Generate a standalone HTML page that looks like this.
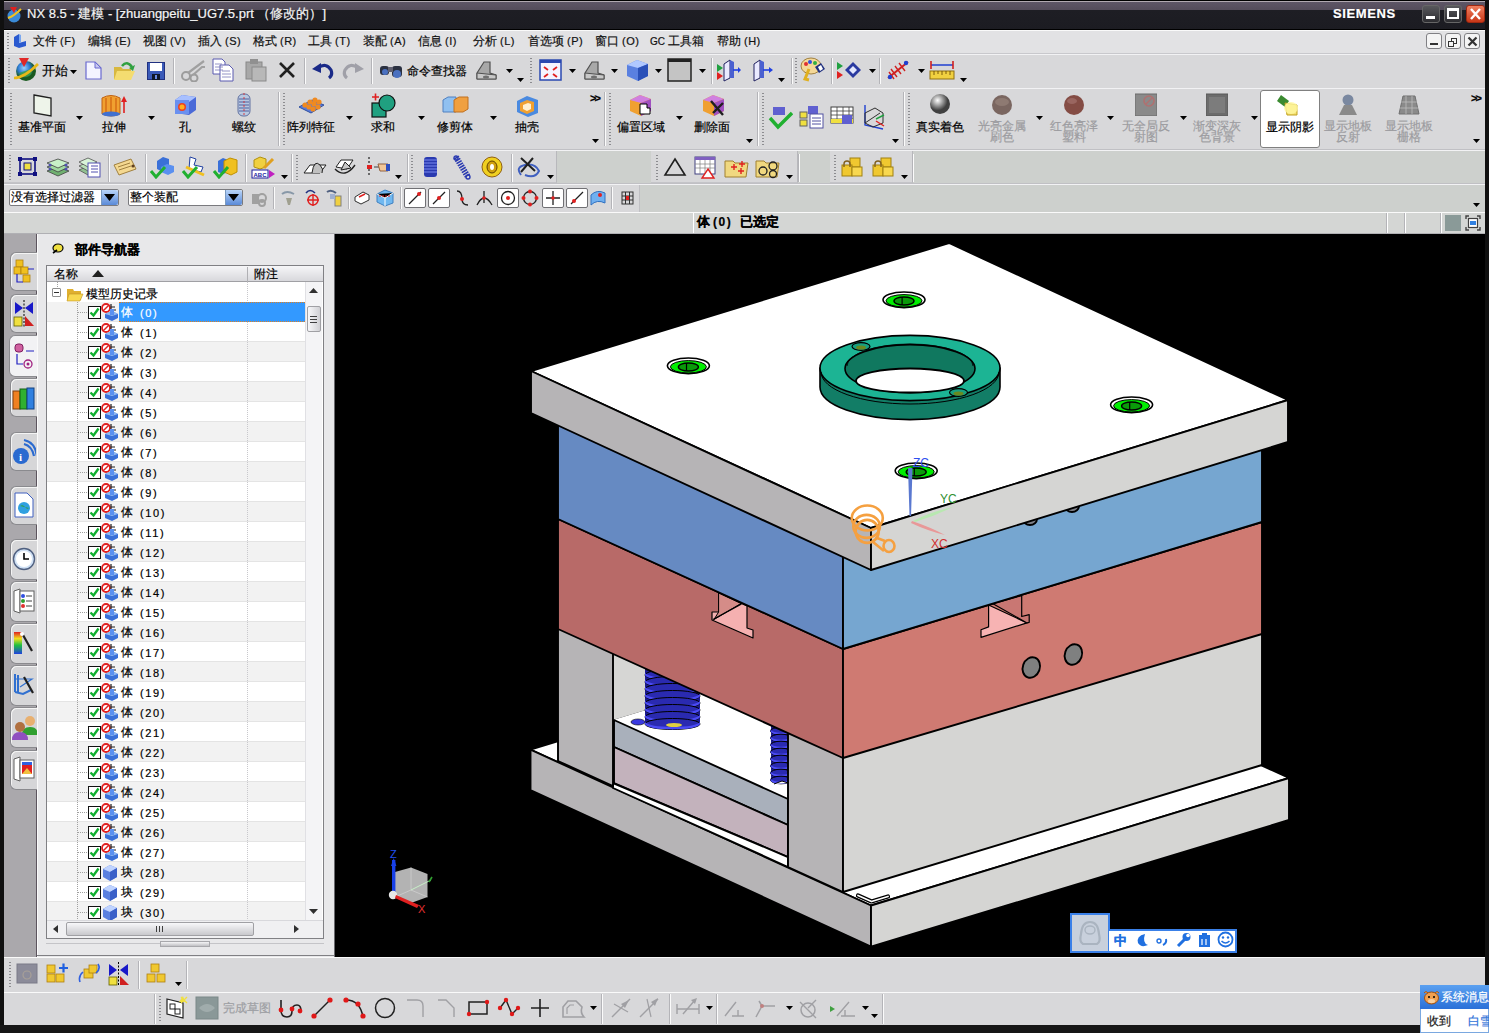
<!DOCTYPE html>
<html><head><meta charset="utf-8">
<style>
*{margin:0;padding:0;box-sizing:border-box}
html,body{width:1489px;height:1033px;overflow:hidden;background:#d6d6d6;font-family:"Liberation Sans",sans-serif;font-size:12px;color:#000}
.a{position:absolute}
.t{position:absolute;white-space:nowrap;font-size:12px;line-height:14px;-webkit-text-stroke:0.2px currentColor}
.dis{color:#9c9ca0}
</style></head><body>
<div class="a" style="left:0px;top:0px;width:1489px;height:30px;background:linear-gradient(#000 0 1px,#b0a8b0 1px 2px,#5e5666 2px,#544c5a 10px,#1e1e24 10px,#1c1c22 29px,#000 29px)"></div>
<div class="a" style="left:0px;top:0px;width:4px;height:1033px;background:#101010"></div>
<div class="a" style="left:1485px;top:0px;width:4px;height:1033px;background:#101010"></div>
<div class="a" style="left:0px;top:1025px;width:1489px;height:8px;background:#161616"></div>
<svg class="a" style="left:5px;top:5px;" width="20" height="18" viewBox="0 0 20 18"><circle cx="9" cy="11" r="6.5" fill="#3a8ad8"/><path d="M3,13 q6,-2 13,-9" stroke="#f0c020" stroke-width="2" fill="none"/><polygon points="5,2 12,2 9,8" fill="#e02020"/></svg>
<div class="t" style="left:27px;top:6px;color:#f4f4f4;font-size:13px;line-height:15px">NX 8.5 - 建模 - [zhuangpeitu_UG7.5.prt （修改的）]</div>
<div class="t" style="left:1333px;top:6px;color:#fff;font-size:13px;font-weight:bold;letter-spacing:0.6px;line-height:15px">SIEMENS</div>
<div class="a" style="left:1422px;top:5px;width:18px;height:18px;background:linear-gradient(#58585c,#2c2c30);border:1px solid #666;border-radius:3px"></div>
<div class="a" style="left:1426px;top:16px;width:9px;height:3px;background:#fff"></div>
<div class="a" style="left:1444px;top:5px;width:18px;height:18px;background:linear-gradient(#58585c,#2c2c30);border:1px solid #666;border-radius:3px"></div>
<div class="a" style="left:1447px;top:8px;width:12px;height:11px;border:2px solid #fff;border-top-width:3px"></div>
<div class="a" style="left:1466px;top:5px;width:19px;height:18px;background:linear-gradient(#f08060,#c83818);border:1px solid #a02810;border-radius:3px"></div>
<svg class="a" style="left:1469px;top:8px;" width="13" height="12" viewBox="0 0 13 12"><path d="M2,1 L11,11 M11,1 L2,11" stroke="#fff" stroke-width="2.4"/></svg>
<div class="a" style="left:4px;top:30px;width:1481px;height:24px;background:#e2e2e4;border-top:1px solid #fafafa;border-bottom:1px solid #c8c8cc"></div>
<div class="a" style="left:7px;top:33px;width:2px;height:18px;background:repeating-linear-gradient(#8c8c90 0 1px,transparent 1px 3px)"></div>
<svg class="a" style="left:12px;top:33px;" width="16" height="16" viewBox="0 0 16 16"><polygon points="2,4 7,1 7,10 14,8 14,13 7,15 2,13" fill="#2a5ad0"/><polygon points="7,1 9,2 9,9 7,10" fill="#7aa8f0"/></svg>
<div class="t" style="left:33px;top:34px;font-size:12px;color:#111">文件<span style="font-size:11px;margin-left:3px;letter-spacing:0.5px">(F)</span></div>
<div class="t" style="left:88px;top:34px;font-size:12px;color:#111">编辑<span style="font-size:11px;margin-left:3px;letter-spacing:0.5px">(E)</span></div>
<div class="t" style="left:143px;top:34px;font-size:12px;color:#111">视图<span style="font-size:11px;margin-left:3px;letter-spacing:0.5px">(V)</span></div>
<div class="t" style="left:198px;top:34px;font-size:12px;color:#111">插入<span style="font-size:11px;margin-left:3px;letter-spacing:0.5px">(S)</span></div>
<div class="t" style="left:253px;top:34px;font-size:12px;color:#111">格式<span style="font-size:11px;margin-left:3px;letter-spacing:0.5px">(R)</span></div>
<div class="t" style="left:308px;top:34px;font-size:12px;color:#111">工具<span style="font-size:11px;margin-left:3px;letter-spacing:0.5px">(T)</span></div>
<div class="t" style="left:363px;top:34px;font-size:12px;color:#111">装配<span style="font-size:11px;margin-left:3px;letter-spacing:0.5px">(A)</span></div>
<div class="t" style="left:418px;top:34px;font-size:12px;color:#111">信息<span style="font-size:11px;margin-left:3px;letter-spacing:0.5px">(I)</span></div>
<div class="t" style="left:473px;top:34px;font-size:12px;color:#111">分析<span style="font-size:11px;margin-left:3px;letter-spacing:0.5px">(L)</span></div>
<div class="t" style="left:528px;top:34px;font-size:12px;color:#111">首选项<span style="font-size:11px;margin-left:3px;letter-spacing:0.5px">(P)</span></div>
<div class="t" style="left:595px;top:34px;font-size:12px;color:#111">窗口<span style="font-size:11px;margin-left:3px;letter-spacing:0.5px">(O)</span></div>
<div class="t" style="left:650px;top:34px;font-size:12px;color:#111"><span style="font-size:10px">GC</span> 工具箱</div>
<div class="t" style="left:717px;top:34px;font-size:12px;color:#111">帮助<span style="font-size:11px;margin-left:3px;letter-spacing:0.5px">(H)</span></div>
<div class="a" style="left:1426px;top:33px;width:16px;height:16px;border:1px solid #808084;border-radius:3px;background:#f4f4f4"></div>
<div class="a" style="left:1445px;top:33px;width:16px;height:16px;border:1px solid #808084;border-radius:3px;background:#f4f4f4"></div>
<div class="a" style="left:1464px;top:33px;width:16px;height:16px;border:1px solid #808084;border-radius:3px;background:#f4f4f4"></div>
<div class="a" style="left:1430px;top:43px;width:8px;height:2px;background:#333"></div>
<div class="a" style="left:1451px;top:38px;width:6px;height:6px;border:1.5px solid #333"></div>
<div class="a" style="left:1448px;top:41px;width:6px;height:6px;border:1.5px solid #333;background:#f4f4f4"></div>
<svg class="a" style="left:1467px;top:36px;" width="11" height="11" viewBox="0 0 11 11"><path d="M1.5,1.5 L9.5,9.5 M9.5,1.5 L1.5,9.5" stroke="#333" stroke-width="2.2"/></svg>
<div class="a" style="left:4px;top:54px;width:1481px;height:35px;background:#d8d8da;border-top:1px solid #f2f2f4;border-bottom:1px solid #c0c0c4"></div>
<div class="a" style="left:4px;top:88px;width:1481px;height:62px;background:#d8d8da;border-top:1px solid #f2f2f4;border-bottom:1px solid #c0c0c4"></div>
<div class="a" style="left:4px;top:150px;width:1481px;height:34px;background:#cdd0cd;border-top:1px solid #f2f2f4;border-bottom:1px solid #c0c0c4"></div>
<div class="a" style="left:4px;top:151px;width:553px;height:32px;background:#d8d8da;border-right:1px solid #b8b8bc;border-bottom:1px solid #c4c4c8"></div>
<div class="a" style="left:651px;top:151px;width:147px;height:32px;background:#d8d8da;border-right:1px solid #b8b8bc;border-bottom:1px solid #c4c4c8"></div>
<div class="a" style="left:830px;top:151px;width:83px;height:32px;background:#d8d8da;border-right:1px solid #b8b8bc;border-bottom:1px solid #c4c4c8"></div>
<div class="a" style="left:4px;top:184px;width:1481px;height:28px;background:#cdd0cd;border-top:1px solid #f2f2f4"></div>
<div class="a" style="left:4px;top:185px;width:636px;height:27px;background:#d8d8da;border-right:1px solid #c0c0c4"></div>
<div class="a" style="left:4px;top:212px;width:1481px;height:22px;background:#d4d6d4;border-top:1px solid #fafafa;border-bottom:1px solid #b0b0b4"></div>
<div class="a" style="left:8px;top:58px;width:2px;height:26px;background:repeating-linear-gradient(#8c8c90 0 1px,transparent 1px 3px)"></div>
<svg class="a" style="left:13px;top:57px;" width="27" height="26" viewBox="0 0 27 26"><defs><radialGradient id="gl" cx="40%" cy="35%"><stop offset="0" stop-color="#9ad0ff"/><stop offset="0.6" stop-color="#2a78d0"/><stop offset="1" stop-color="#1a5a20"/></radialGradient></defs>
<circle cx="13" cy="14" r="10" fill="url(#gl)"/><path d="M6,16 q3,6 10,3 q4,-2 2,-7" fill="#3aa040" opacity="0.8"/>
<path d="M1,21 q10,0 24,-14" stroke="#e8b818" stroke-width="2.6" fill="none"/><polygon points="6,1 16,1 11,10" fill="#e02828"/></svg>
<div class="t" style="left:42px;top:64px;font-size:13px">开始</div>
<svg class="a" style="left:70px;top:70px;" width="7" height="4" viewBox="0 0 7 4"><polygon points="0,0 7,0 3.5,4" fill="#000"/></svg>
<svg class="a" style="left:85px;top:61px;" width="17" height="19" viewBox="0 0 17 19"><polygon points="1,1 10,1 16,7 16,18 1,18" fill="#f4f4ff" stroke="#6a6ad0" stroke-width="1.2"/><polygon points="10,1 10,7 16,7" fill="#c8c8f0" stroke="#6a6ad0" stroke-width="1"/></svg>
<svg class="a" style="left:113px;top:60px;" width="23" height="21" viewBox="0 0 23 21"><polygon points="1,7 8,7 10,9 18,9 18,19 1,19" fill="#d8b840"/><polygon points="4,11 22,11 18,20 1,20" fill="#f4dc70"/><path d="M9,6 q5,-6 10,1" stroke="#30a040" stroke-width="2.6" fill="none"/><polygon points="16,8 22,5 20,11" fill="#30a040"/></svg>
<svg class="a" style="left:147px;top:62px;" width="18" height="18" viewBox="0 0 18 18"><rect x="0.5" y="0.5" width="17" height="17" fill="#3a5ab8" stroke="#203080"/><rect x="3" y="1" width="12" height="8" fill="#fff"/><rect x="5" y="12" width="8" height="6" fill="#101828"/><rect x="8" y="13" width="2" height="4" fill="#6a8ae0"/></svg>
<div class="a" style="left:173px;top:58px;width:2px;height:26px;border-left:1px solid #b4b4b8;border-right:1px solid #fbfbfb"></div>
<svg class="a" style="left:180px;top:58px;" width="26" height="24" viewBox="0 0 26 24"><circle cx="6" cy="18" r="4" fill="none" stroke="#9c9c9c" stroke-width="2"/><circle cx="14" cy="20" r="3.5" fill="none" stroke="#9c9c9c" stroke-width="2"/><path d="M8,15 L24,3 M13,17 L22,9 L25,9" stroke="#a0a0a0" stroke-width="2.2" fill="none"/></svg>
<svg class="a" style="left:212px;top:58px;" width="23" height="24" viewBox="0 0 23 24"><polygon points="1,1 10,1 13,4 13,16 1,16" fill="#fff" stroke="#5a5ab0"/><polygon points="8,7 17,7 21,11 21,23 8,23" fill="#fff" stroke="#5a5ab0"/><path d="M10,13h8M10,16h9M10,19h9M3,6h7M3,9h8M3,12h8" stroke="#7a7ab8" stroke-width="0.8"/></svg>
<svg class="a" style="left:245px;top:58px;" width="22" height="24" viewBox="0 0 22 24"><rect x="1" y="4" width="16" height="17" fill="#a8a8a8" stroke="#888"/><rect x="5" y="1" width="8" height="5" fill="#909090"/><rect x="7" y="9" width="14" height="14" fill="#b8b8b8" stroke="#8a8a8a"/></svg>
<svg class="a" style="left:277px;top:60px;" width="20" height="20" viewBox="0 0 20 20"><path d="M3,3 L17,17 M17,3 L3,17" stroke="#202020" stroke-width="2.6"/></svg>
<div class="a" style="left:304px;top:58px;width:2px;height:26px;border-left:1px solid #b4b4b8;border-right:1px solid #fbfbfb"></div>
<svg class="a" style="left:311px;top:60px;" width="23" height="20" viewBox="0 0 23 20"><path d="M7,8 q8,-6 13,2 q2,5 -2,8" stroke="#1a2a88" stroke-width="3.2" fill="none"/><polygon points="1,9 10,3 10,13" fill="#1a2a88"/></svg>
<svg class="a" style="left:342px;top:60px;" width="23" height="20" viewBox="0 0 23 20"><path d="M16,8 q-8,-6 -13,2 q-2,5 2,8" stroke="#a0a0a8" stroke-width="3.2" fill="none"/><polygon points="22,9 13,3 13,13" fill="#a0a0a8"/></svg>
<div class="a" style="left:371px;top:58px;width:2px;height:26px;border-left:1px solid #b4b4b8;border-right:1px solid #fbfbfb"></div>
<svg class="a" style="left:379px;top:60px;" width="25" height="20" viewBox="0 0 25 20"><rect x="1" y="6" width="9" height="9" rx="3" fill="#2a3040"/><rect x="13" y="6" width="10" height="11" rx="3" fill="#2a3040"/><circle cx="18" cy="14" r="4" fill="#4a70c0"/><circle cx="6" cy="12" r="3" fill="#4a70c0"/><rect x="9" y="7" width="5" height="5" fill="#606070"/></svg>
<div class="t" style="left:407px;top:64px;font-size:12px">命令查找器</div>
<svg class="a" style="left:474px;top:59px;" width="24" height="22" viewBox="0 0 24 22"><polygon points="3,14 10,3 16,3 16,14 22,16 22,20 3,20" fill="#a8a8a8" stroke="#505050" stroke-width="1.2"/><polygon points="3,14 22,16 22,20 3,20" fill="#c8c8c8" stroke="#505050" stroke-width="1"/><ellipse cx="12" cy="18" rx="3" ry="1.5" fill="#707070"/></svg>
<svg class="a" style="left:506px;top:69px;" width="7" height="4" viewBox="0 0 7 4"><polygon points="0,0 7,0 3.5,4" fill="#000"/></svg>
<svg class="a" style="left:517px;top:78px;" width="7" height="4" viewBox="0 0 7 4"><polygon points="0,0 7,0 3.5,4" fill="#000"/></svg>
<div class="a" style="left:530px;top:58px;width:2px;height:26px;background:repeating-linear-gradient(#8c8c90 0 1px,transparent 1px 3px)"></div>
<svg class="a" style="left:539px;top:59px;" width="23" height="22" viewBox="0 0 23 22"><rect x="1" y="1" width="21" height="20" fill="#f4f4ff" stroke="#2a48b0" stroke-width="1.5"/><rect x="1" y="1" width="21" height="3" fill="#2a48b0"/><path d="M5,8 l4,3 M18,8 l-4,3 M5,18 l4,-3 M18,18 l-4,-3" stroke="#e02020" stroke-width="1.8"/></svg>
<svg class="a" style="left:569px;top:69px;" width="7" height="4" viewBox="0 0 7 4"><polygon points="0,0 7,0 3.5,4" fill="#000"/></svg>
<svg class="a" style="left:582px;top:59px;" width="24" height="22" viewBox="0 0 24 22"><polygon points="3,14 10,3 16,3 16,14 22,16 22,20 3,20" fill="#a8a8a8" stroke="#505050" stroke-width="1.2"/><polygon points="3,14 22,16 22,20 3,20" fill="#c8c8c8" stroke="#505050" stroke-width="1"/><ellipse cx="12" cy="18" rx="3" ry="1.5" fill="#707070"/></svg>
<svg class="a" style="left:611px;top:69px;" width="7" height="4" viewBox="0 0 7 4"><polygon points="0,0 7,0 3.5,4" fill="#000"/></svg>
<svg class="a" style="left:625px;top:58px;" width="25" height="24" viewBox="0 0 25 24"><polygon points="2,7 12,2 23,6 23,18 13,23 2,18" fill="#5a80e0"/><polygon points="2,7 12,2 23,6 13,10" fill="#b0c8ff"/><polygon points="13,10 23,6 23,18 13,23" fill="#2a50b8"/></svg>
<svg class="a" style="left:655px;top:69px;" width="7" height="4" viewBox="0 0 7 4"><polygon points="0,0 7,0 3.5,4" fill="#000"/></svg>
<svg class="a" style="left:667px;top:58px;" width="26" height="24" viewBox="0 0 26 24"><rect x="1" y="1" width="23" height="22" fill="#c4c4c4" stroke="#222" stroke-width="1.5"/><rect x="1" y="1" width="23" height="3" fill="#222"/></svg>
<svg class="a" style="left:699px;top:69px;" width="7" height="4" viewBox="0 0 7 4"><polygon points="0,0 7,0 3.5,4" fill="#000"/></svg>
<div class="a" style="left:711px;top:58px;width:2px;height:26px;border-left:1px solid #b4b4b8;border-right:1px solid #fbfbfb"></div>
<svg class="a" style="left:716px;top:58px;" width="25" height="24" viewBox="0 0 25 24"><polygon points="1,6 7,10 1,14" fill="#20a040"/><polygon points="1,14 7,18 1,22" fill="#e02020"/><polygon points="8,6 14,2 14,20 8,23" fill="#eaeaff" stroke="#202060"/><polygon points="14,2 18,4 18,20 14,20" fill="#4a60d0"/><path d="M17,12 h7" stroke="#2040e0" stroke-width="1.6"/><polygon points="22,9 25,12 22,15" fill="#2040e0"/></svg>
<svg class="a" style="left:750px;top:58px;" width="25" height="24" viewBox="0 0 25 24"><polygon points="4,6 10,2 10,20 4,23" fill="#eaeaff" stroke="#202060"/><polygon points="10,2 14,4 14,20 10,20" fill="#4a60d0"/><path d="M13,12 h8" stroke="#2040e0" stroke-width="1.6"/><polygon points="19,9 23,12 19,15" fill="#2040e0"/></svg>
<svg class="a" style="left:778px;top:78px;" width="7" height="4" viewBox="0 0 7 4"><polygon points="0,0 7,0 3.5,4" fill="#000"/></svg>
<div class="a" style="left:791px;top:58px;width:2px;height:26px;border-left:1px solid #b4b4b8;border-right:1px solid #fbfbfb"></div>
<div class="a" style="left:795px;top:58px;width:2px;height:26px;background:repeating-linear-gradient(#8c8c90 0 1px,transparent 1px 3px)"></div>
<svg class="a" style="left:800px;top:57px;" width="26" height="25" viewBox="0 0 26 25"><ellipse cx="11" cy="9" rx="10" ry="8" fill="#f4d898" stroke="#a08040"/><circle cx="6" cy="7" r="2" fill="#e03030"/><circle cx="10" cy="5" r="2" fill="#3050e0"/><circle cx="15" cy="6" r="2" fill="#30b040"/><path d="M9,12 l-4,10 l4,1" stroke="#e0b020" stroke-width="3" fill="none"/><polygon points="15,10 21,6 25,12 19,16" fill="#203080"/><polygon points="18,10 21,8 23,12 20,14" fill="#fff"/></svg>
<div class="a" style="left:831px;top:58px;width:2px;height:26px;border-left:1px solid #b4b4b8;border-right:1px solid #fbfbfb"></div>
<svg class="a" style="left:836px;top:58px;" width="27" height="24" viewBox="0 0 27 24"><polygon points="1,4 7,8 1,12" fill="#20a040"/><polygon points="1,13 7,17 1,21" fill="#e02020"/><polygon points="9,12 17,4 25,12 17,20" fill="#2a3aa0"/><polygon points="13,12 17,8 21,12 17,16" fill="#e4e8ff"/></svg>
<svg class="a" style="left:869px;top:69px;" width="7" height="4" viewBox="0 0 7 4"><polygon points="0,0 7,0 3.5,4" fill="#000"/></svg>
<div class="a" style="left:879px;top:58px;width:2px;height:26px;border-left:1px solid #b4b4b8;border-right:1px solid #fbfbfb"></div>
<svg class="a" style="left:886px;top:58px;" width="25" height="24" viewBox="0 0 25 24"><path d="M2,20 L22,4" stroke="#d02020" stroke-width="2"/><path d="M5,11 l6,8 M9,8 l6,8 M13,5 l6,8 M3,14 l5,7" stroke="#d02020" stroke-width="1.4"/><circle cx="20" cy="5" r="2.2" fill="#2040d0"/><circle cx="4" cy="19" r="2.2" fill="#2040d0"/></svg>
<svg class="a" style="left:918px;top:69px;" width="7" height="4" viewBox="0 0 7 4"><polygon points="0,0 7,0 3.5,4" fill="#000"/></svg>
<svg class="a" style="left:929px;top:59px;" width="26" height="22" viewBox="0 0 26 22"><path d="M2,6 h22" stroke="#2040d0" stroke-width="1.5"/><path d="M2,2 v8 M24,2 v8" stroke="#d02020" stroke-width="1.6"/><rect x="1" y="12" width="24" height="8" fill="#f0d040" stroke="#907010"/><path d="M5,12v4M9,12v3M13,12v4M17,12v3M21,12v4" stroke="#604000" stroke-width="0.8"/></svg>
<svg class="a" style="left:960px;top:78px;" width="7" height="4" viewBox="0 0 7 4"><polygon points="0,0 7,0 3.5,4" fill="#000"/></svg>
<div class="a" style="left:10px;top:93px;width:2px;height:52px;background:repeating-linear-gradient(#8c8c90 0 1px,transparent 1px 3px)"></div>
<svg class="a" style="left:31px;top:93px;" width="23" height="24" viewBox="0 0 23 24"><polygon points="3,2 20,5 20,23 3,20" fill="#eef4ea" stroke="#202020" stroke-width="1.3"/></svg>
<div class="t " style="left:2px;top:120px;width:80px;text-align:center;font-size:12px">基准平面</div>
<svg class="a" style="left:76px;top:116px;" width="7" height="4" viewBox="0 0 7 4"><polygon points="0,0 7,0 3.5,4" fill="#000"/></svg>
<svg class="a" style="left:100px;top:93px;" width="28" height="25" viewBox="0 0 28 25"><path d="M2,5 q9,-5 18,0 v16 q-9,4 -18,0 z" fill="#f0a030" stroke="#c06010"/><path d="M6,5 v16 M11,4 v18 M16,5 v16" stroke="#d06010" stroke-width="1.2"/><ellipse cx="11" cy="21" rx="9" ry="2.5" fill="#4070d0"/><path d="M24,20 v-12" stroke="#e02020" stroke-width="1.6"/><polygon points="21,9 24,3 27,9" fill="#e02020"/></svg>
<div class="t " style="left:74px;top:120px;width:80px;text-align:center;font-size:12px">拉伸</div>
<svg class="a" style="left:148px;top:116px;" width="7" height="4" viewBox="0 0 7 4"><polygon points="0,0 7,0 3.5,4" fill="#000"/></svg>
<svg class="a" style="left:174px;top:94px;" width="23" height="22" viewBox="0 0 23 22"><polygon points="1,6 8,1 22,3 22,16 15,21 1,19" fill="#4a6ad8"/><polygon points="1,6 8,1 22,3 15,8" fill="#a8c0ff"/><rect x="1" y="6" width="14" height="14" fill="#6a90f0"/><circle cx="8" cy="13" r="4" fill="#f04020"/><circle cx="8" cy="13" r="2.5" fill="#ffb020"/></svg>
<div class="t " style="left:145px;top:120px;width:80px;text-align:center;font-size:12px">孔</div>
<svg class="a" style="left:236px;top:92px;" width="16" height="26" viewBox="0 0 16 26"><rect x="2" y="2" width="12" height="22" rx="5" fill="#b8c8e0" stroke="#6070a0"/><path d="M3,7h10M3,10h10M3,13h10M3,16h10M3,19h10" stroke="#5060a0" stroke-width="1"/><path d="M8,1v24" stroke="#e02020" stroke-width="0.8" stroke-dasharray="2 2"/></svg>
<div class="t " style="left:204px;top:120px;width:80px;text-align:center;font-size:12px">螺纹</div>
<div class="a" style="left:278px;top:92px;width:2px;height:54px;border-left:1px solid #b4b4b8;border-right:1px solid #fbfbfb"></div>
<div class="a" style="left:283px;top:93px;width:2px;height:52px;background:repeating-linear-gradient(#8c8c90 0 1px,transparent 1px 3px)"></div>
<svg class="a" style="left:298px;top:95px;" width="27" height="20" viewBox="0 0 27 20"><polygon points="1,12 14,5 26,10 13,18" fill="#5a7ad8" stroke="#3050a0"/><g fill="#f08a20"><circle cx="7" cy="10" r="2.6"/><circle cx="12" cy="7" r="2.6"/><circle cx="17" cy="5" r="2.6"/><circle cx="11" cy="12" r="2.6"/><circle cx="16" cy="9" r="2.6"/><circle cx="21" cy="7" r="2.6"/><circle cx="15" cy="14" r="2.6"/><circle cx="20" cy="12" r="2.6"/></g></svg>
<div class="t " style="left:271px;top:120px;width:80px;text-align:center;font-size:12px">阵列特征</div>
<svg class="a" style="left:346px;top:116px;" width="7" height="4" viewBox="0 0 7 4"><polygon points="0,0 7,0 3.5,4" fill="#000"/></svg>
<svg class="a" style="left:370px;top:92px;" width="26" height="27" viewBox="0 0 26 27"><rect x="2" y="11" width="14" height="14" fill="#20a080" stroke="#101010" stroke-width="1.2"/><circle cx="17" cy="11" r="8" fill="#20a080" stroke="#101010" stroke-width="1.2"/><path d="M2,5h7M5.5,1.5v7" stroke="#e02020" stroke-width="1.6"/></svg>
<div class="t " style="left:343px;top:120px;width:80px;text-align:center;font-size:12px">求和</div>
<svg class="a" style="left:418px;top:116px;" width="7" height="4" viewBox="0 0 7 4"><polygon points="0,0 7,0 3.5,4" fill="#000"/></svg>
<svg class="a" style="left:442px;top:95px;" width="27" height="20" viewBox="0 0 27 20"><polygon points="1,5 6,2 14,2 14,17 1,17" fill="#90c0f0" stroke="#5080c0"/><polygon points="12,5 17,2 26,2 26,14 21,17 12,17" fill="#f0a040" stroke="#c07020"/></svg>
<div class="t " style="left:415px;top:120px;width:80px;text-align:center;font-size:12px">修剪体</div>
<svg class="a" style="left:490px;top:116px;" width="7" height="4" viewBox="0 0 7 4"><polygon points="0,0 7,0 3.5,4" fill="#000"/></svg>
<svg class="a" style="left:515px;top:93px;" width="25" height="24" viewBox="0 0 25 24"><polygon points="2,8 12,3 23,7 23,20 13,24 2,19" fill="#4a8ae0"/><polygon points="5,10 12,7 19,9 19,18 12,21 5,18" fill="#f0a030"/><polygon points="8,12 13,10 16,11 16,16 12,18 8,16" fill="#fff0d0"/></svg>
<div class="t " style="left:487px;top:120px;width:80px;text-align:center;font-size:12px">抽壳</div>
<div class="t" style="left:590px;top:91px;"><b style="font-size:11px;letter-spacing:-2px">&gt;&gt;</b></div>
<svg class="a" style="left:592px;top:139px;" width="7" height="4" viewBox="0 0 7 4"><polygon points="0,0 7,0 3.5,4" fill="#000"/></svg>
<div class="a" style="left:604px;top:92px;width:2px;height:54px;border-left:1px solid #b4b4b8;border-right:1px solid #fbfbfb"></div>
<div class="a" style="left:609px;top:93px;width:2px;height:52px;background:repeating-linear-gradient(#8c8c90 0 1px,transparent 1px 3px)"></div>
<svg class="a" style="left:628px;top:93px;" width="26" height="24" viewBox="0 0 26 24"><polygon points="2,7 12,2 23,6 23,18 13,23 2,18" fill="#f0a030"/><polygon points="2,7 12,2 23,6 13,10" fill="#d080e0"/><polygon points="13,10 23,6 23,18 13,23" fill="#a050c0"/><path d="M12,11 v10 h10 v-6 h-3 v-4 z" fill="#fff" stroke="#000"/></svg>
<div class="t " style="left:601px;top:120px;width:80px;text-align:center;font-size:12px">偏置区域</div>
<svg class="a" style="left:676px;top:116px;" width="7" height="4" viewBox="0 0 7 4"><polygon points="0,0 7,0 3.5,4" fill="#000"/></svg>
<svg class="a" style="left:701px;top:93px;" width="24" height="24" viewBox="0 0 24 24"><polygon points="2,7 12,2 23,6 23,18 13,23 2,18" fill="#f0a030"/><polygon points="2,7 12,2 23,6 13,10" fill="#d080e0"/><polygon points="13,10 23,6 23,18 13,23" fill="#a050c0"/><path d="M10,8 L22,22 M22,10 L12,20" stroke="#202020" stroke-width="2.4"/></svg>
<div class="t " style="left:672px;top:120px;width:80px;text-align:center;font-size:12px">删除面</div>
<svg class="a" style="left:746px;top:139px;" width="7" height="4" viewBox="0 0 7 4"><polygon points="0,0 7,0 3.5,4" fill="#000"/></svg>
<div class="a" style="left:757px;top:92px;width:2px;height:54px;border-left:1px solid #b4b4b8;border-right:1px solid #fbfbfb"></div>
<div class="a" style="left:762px;top:93px;width:2px;height:52px;background:repeating-linear-gradient(#8c8c90 0 1px,transparent 1px 3px)"></div>
<svg class="a" style="left:768px;top:104px;" width="25" height="26" viewBox="0 0 25 26"><rect x="5" y="3" width="12" height="8" fill="#6060d0"/><path d="M2,14 l8,9 l14,-14" stroke="#20b030" stroke-width="3.4" fill="none"/></svg>
<svg class="a" style="left:798px;top:104px;" width="27" height="26" viewBox="0 0 27 26"><rect x="10" y="2" width="10" height="8" fill="#6060d0"/><rect x="2" y="8" width="7" height="6" fill="#f0e040" stroke="#606060"/><rect x="2" y="16" width="7" height="6" fill="#f0e040" stroke="#606060"/><rect x="12" y="10" width="13" height="14" fill="#fff" stroke="#5050a0"/><path d="M14,14h9M14,17h9M14,20h9" stroke="#5050a0"/></svg>
<svg class="a" style="left:830px;top:104px;" width="26" height="26" viewBox="0 0 26 26"><rect x="1" y="3" width="22" height="16" fill="#fff" stroke="#404040"/><path d="M1,7h22M1,11h22M1,15h22M7,3v16M13,3v16M19,3v16" stroke="#404040" stroke-width="0.8"/><rect x="1" y="15" width="22" height="4" fill="#f0e040"/><rect x="12" y="11" width="10" height="9" fill="#6060d0"/></svg>
<svg class="a" style="left:862px;top:103px;" width="24" height="28" viewBox="0 0 24 28"><path d="M3,2 v20 l18,4" stroke="#2040d0" stroke-width="1.4" fill="none"/><polygon points="3,10 13,5 21,10 21,20 11,24 3,20" fill="none" stroke="#303030"/><path d="M3,20 L18,10" stroke="#303030"/><path d="M14,18 l8,5" stroke="#e02020" stroke-width="1.4"/><path d="M14,16 l8,-4" stroke="#20a040" stroke-width="1.4"/></svg>
<svg class="a" style="left:892px;top:139px;" width="7" height="4" viewBox="0 0 7 4"><polygon points="0,0 7,0 3.5,4" fill="#000"/></svg>
<div class="a" style="left:903px;top:92px;width:2px;height:54px;border-left:1px solid #b4b4b8;border-right:1px solid #fbfbfb"></div>
<div class="a" style="left:908px;top:93px;width:2px;height:52px;background:repeating-linear-gradient(#8c8c90 0 1px,transparent 1px 3px)"></div>
<svg class="a" style="left:929px;top:93px;" width="22" height="22" viewBox="0 0 22 22"><defs><radialGradient id="sp" cx="38%" cy="32%"><stop offset="0" stop-color="#fff"/><stop offset="0.5" stop-color="#a0a0a0"/><stop offset="1" stop-color="#404040"/></radialGradient></defs><circle cx="11" cy="11" r="10" fill="url(#sp)"/></svg>
<div class="t " style="left:900px;top:120px;width:80px;text-align:center;font-size:12px">真实着色</div>
<svg class="a" style="left:991px;top:93px;" width="22" height="23" viewBox="0 0 22 23"><circle cx="11" cy="12" r="10" fill="#7a6660"/><ellipse cx="11" cy="9" rx="7" ry="4" fill="#8e7a72"/></svg>
<div class="t dis" style="left:972px;top:121px;width:60px;text-align:center;line-height:11px;font-size:12px">光亮金属<br>刷色</div>
<svg class="a" style="left:1036px;top:116px;" width="7" height="4" viewBox="0 0 7 4"><polygon points="0,0 7,0 3.5,4" fill="#000"/></svg>
<svg class="a" style="left:1063px;top:93px;" width="22" height="23" viewBox="0 0 22 23"><circle cx="11" cy="12" r="10" fill="#844c44"/><ellipse cx="9" cy="8" rx="5" ry="3" fill="#9a6660"/></svg>
<div class="t dis" style="left:1044px;top:121px;width:60px;text-align:center;line-height:11px;font-size:12px">红色亮泽<br>塑料</div>
<svg class="a" style="left:1107px;top:116px;" width="7" height="4" viewBox="0 0 7 4"><polygon points="0,0 7,0 3.5,4" fill="#000"/></svg>
<svg class="a" style="left:1135px;top:93px;" width="22" height="23" viewBox="0 0 22 23"><rect x="0" y="1" width="22" height="22" fill="#8a8a8a" stroke="#6a6a6a"/><circle cx="14" cy="8" r="5" fill="none" stroke="#b07070" stroke-width="1.6"/><path d="M11,11 L17,5" stroke="#b07070" stroke-width="1.4"/></svg>
<div class="t dis" style="left:1116px;top:121px;width:60px;text-align:center;line-height:11px;font-size:12px">无全局反<br>射图</div>
<svg class="a" style="left:1180px;top:116px;" width="7" height="4" viewBox="0 0 7 4"><polygon points="0,0 7,0 3.5,4" fill="#000"/></svg>
<svg class="a" style="left:1206px;top:93px;" width="22" height="23" viewBox="0 0 22 23"><rect x="0" y="1" width="22" height="22" fill="#6c6c6c" stroke="#585858"/><rect x="3" y="4" width="16" height="16" fill="#7c7c7c"/></svg>
<div class="t dis" style="left:1187px;top:121px;width:60px;text-align:center;line-height:11px;font-size:12px">渐变深灰<br>色背景</div>
<svg class="a" style="left:1251px;top:116px;" width="7" height="4" viewBox="0 0 7 4"><polygon points="0,0 7,0 3.5,4" fill="#000"/></svg>
<div class="a" style="left:1260px;top:90px;width:60px;height:58px;background:#fff;border:1px solid #808080;border-radius:3px"></div>
<svg class="a" style="left:1277px;top:93px;" width="24" height="24" viewBox="0 0 24 24"><polygon points="4,2 12,8 8,14 0,8" fill="#3a8a30"/><polygon points="8,10 20,12 20,22 10,22" fill="#f4e070" stroke="#c0a020"/><ellipse cx="14" cy="15" rx="7" ry="6" fill="#fff8a0" opacity="0.8"/></svg>
<div class="t" style="left:1260px;top:120px;width:60px;text-align:center;font-size:12px">显示阴影</div>
<svg class="a" style="left:1337px;top:93px;" width="22" height="23" viewBox="0 0 22 23"><circle cx="11" cy="7" r="5.5" fill="#7a88a0"/><polygon points="2,22 7,12 15,12 20,22" fill="#8a8a8a"/></svg>
<div class="t dis" style="left:1318px;top:121px;width:60px;text-align:center;line-height:11px;font-size:12px">显示地板<br>反射</div>
<svg class="a" style="left:1398px;top:93px;" width="22" height="23" viewBox="0 0 22 23"><polygon points="1,21 5,3 17,3 21,21" fill="#8a8a8a" stroke="#707070"/><path d="M3,9h16M2,15h18M8,3v18M14,3v18" stroke="#bcbcbc" stroke-width="0.8"/></svg>
<div class="t dis" style="left:1379px;top:121px;width:60px;text-align:center;line-height:11px;font-size:12px">显示地板<br>栅格</div>
<div class="t" style="left:1471px;top:91px;"><b style="font-size:11px;letter-spacing:-2px">&gt;&gt;</b></div>
<svg class="a" style="left:1473px;top:139px;" width="7" height="4" viewBox="0 0 7 4"><polygon points="0,0 7,0 3.5,4" fill="#000"/></svg>
<div class="a" style="left:9px;top:155px;width:2px;height:26px;background:repeating-linear-gradient(#8c8c90 0 1px,transparent 1px 3px)"></div>
<svg class="a" style="left:17px;top:156px;" width="21" height="22" viewBox="0 0 21 22"><rect x="3" y="3" width="15" height="15" fill="none" stroke="#101080" stroke-width="1.6"/><rect x="7" y="7" width="7" height="7" fill="#f0e040" stroke="#101080"/><g fill="#101080"><rect x="1" y="1" width="4" height="4"/><rect x="16" y="1" width="4" height="4"/><rect x="1" y="16" width="4" height="4"/><rect x="16" y="16" width="4" height="4"/></g></svg>
<svg class="a" style="left:46px;top:156px;" width="24" height="22" viewBox="0 0 24 22"><g stroke="#404040" stroke-width="0.8"><polygon points="1,15 12,11 23,15 12,20" fill="#70b070"/><polygon points="1,11 12,7 23,11 12,16" fill="#a0d8a0"/><polygon points="1,7 12,3 23,7 12,12" fill="#c8f0c8"/></g><g fill="#5050b0"><circle cx="4" cy="9" r="1.5"/><circle cx="20" cy="9" r="1.5"/><circle cx="4" cy="13" r="1.5"/><circle cx="20" cy="13" r="1.5"/></g></svg>
<svg class="a" style="left:78px;top:156px;" width="23" height="22" viewBox="0 0 23 22"><g stroke="#505050" stroke-width="0.8"><polygon points="1,14 10,10 19,14 10,19" fill="#90c090"/><polygon points="1,10 10,6 19,10 10,15" fill="#b8e0b8"/><polygon points="1,6 10,2 19,6 10,11" fill="#d8f4d8"/></g><rect x="10" y="7" width="12" height="14" fill="#fff" stroke="#5050b0"/><path d="M13,10h7M13,13h7M13,16h7" stroke="#5050b0"/></svg>
<div class="a" style="left:108px;top:154px;width:2px;height:28px;border-left:1px solid #b4b4b8;border-right:1px solid #fbfbfb"></div>
<svg class="a" style="left:113px;top:158px;" width="25" height="18" viewBox="0 0 25 18"><polygon points="1,7 18,1 23,11 6,17" fill="#f4d890" stroke="#a08040"/><path d="M5,9 l12,-4 M6,12 l12,-4" stroke="#a08040"/><circle cx="20" cy="8" r="1.6" fill="#604020"/></svg>
<div class="a" style="left:145px;top:154px;width:2px;height:28px;border-left:1px solid #b4b4b8;border-right:1px solid #fbfbfb"></div>
<svg class="a" style="left:149px;top:155px;" width="26" height="24" viewBox="0 0 26 24"><polygon points="8,6 14,2 20,4 20,14 14,17 8,14" fill="#3a70d8"/><polygon points="12,12 18,9 25,11 25,17 19,20 12,17" fill="#5a90f0"/><path d="M2,16 l5,6 l9,-10" stroke="#20b030" stroke-width="3" fill="none"/></svg>
<svg class="a" style="left:181px;top:155px;" width="26" height="24" viewBox="0 0 26 24"><polygon points="9,2 15,4 13,10 22,12 20,17 8,14" fill="#fff" stroke="#2040a0"/><path d="M5,12 l18,8" stroke="#f0c020" stroke-width="3"/><path d="M2,16 l5,6 l9,-10" stroke="#20b030" stroke-width="3" fill="none"/></svg>
<svg class="a" style="left:212px;top:155px;" width="26" height="24" viewBox="0 0 26 24"><polygon points="6,6 11,3 16,5 16,17 11,19 6,17" fill="#3a70d8"/><polygon points="12,6 18,3 25,5 25,17 19,20 12,17" fill="#f0c020" stroke="#c09000"/><path d="M2,16 l5,6 l9,-10" stroke="#20b030" stroke-width="3" fill="none"/></svg>
<div class="a" style="left:245px;top:154px;width:2px;height:28px;border-left:1px solid #b4b4b8;border-right:1px solid #fbfbfb"></div>
<svg class="a" style="left:250px;top:155px;" width="26" height="24" viewBox="0 0 26 24"><polygon points="4,5 10,2 16,4 16,12 10,14 4,12" fill="#f0d040" stroke="#b09010"/><path d="M14,13 l9,-9" stroke="#e0a020" stroke-width="3"/><rect x="2" y="15" width="16" height="8" fill="#fff" stroke="#2020a0"/><text x="3.5" y="22" font-size="6" font-family="Liberation Sans" font-weight="bold" fill="#2020a0">ABC</text><polygon points="19,15 25,19 19,23" fill="#c020c0"/></svg>
<svg class="a" style="left:281px;top:175px;" width="7" height="4" viewBox="0 0 7 4"><polygon points="0,0 7,0 3.5,4" fill="#000"/></svg>
<div class="a" style="left:291px;top:154px;width:2px;height:28px;border-left:1px solid #b4b4b8;border-right:1px solid #fbfbfb"></div>
<div class="a" style="left:296px;top:155px;width:2px;height:26px;background:repeating-linear-gradient(#8c8c90 0 1px,transparent 1px 3px)"></div>
<svg class="a" style="left:303px;top:157px;" width="24" height="20" viewBox="0 0 24 20"><polygon points="1,16 7,8 23,8 17,16" fill="#fff" stroke="#202020"/><path d="M9,16 q2,-14 8,-8 q4,4 2,8" fill="#c0c0c0" stroke="#202020"/></svg>
<svg class="a" style="left:333px;top:157px;" width="24" height="20" viewBox="0 0 24 20"><path d="M2,12 q10,10 20,-4" fill="none" stroke="#202020" stroke-width="1.4"/><polygon points="3,10 8,3 20,3 14,12" fill="#fff" stroke="#202020"/><path d="M8,13 l4,-8 l6,6 z" fill="#c8c8c8" stroke="#202020"/></svg>
<svg class="a" style="left:366px;top:156px;" width="25" height="22" viewBox="0 0 25 22"><path d="M3,1v20" stroke="#202020" stroke-width="1.2" stroke-dasharray="2 2"/><rect x="1" y="9" width="5" height="4" fill="#e02020"/><path d="M8,11 h8" stroke="#404040"/><polygon points="12,8 22,8 22,15 14,15" fill="#f4c898" stroke="#906040"/><rect x="20" y="8" width="4" height="7" fill="#3050c0"/></svg>
<svg class="a" style="left:395px;top:175px;" width="7" height="4" viewBox="0 0 7 4"><polygon points="0,0 7,0 3.5,4" fill="#000"/></svg>
<div class="a" style="left:407px;top:154px;width:2px;height:28px;border-left:1px solid #b4b4b8;border-right:1px solid #fbfbfb"></div>
<div class="a" style="left:411px;top:155px;width:2px;height:26px;background:repeating-linear-gradient(#8c8c90 0 1px,transparent 1px 3px)"></div>
<svg class="a" style="left:422px;top:155px;" width="17" height="24" viewBox="0 0 17 24"><rect x="2" y="2" width="13" height="20" rx="3" fill="#2a3ab0"/><path d="M2,5h13M2,8h13M2,11h13M2,14h13M2,17h13" stroke="#7a8af0" stroke-width="1"/></svg>
<svg class="a" style="left:452px;top:155px;" width="20" height="25" viewBox="0 0 20 25"><path d="M4,2 L16,22" stroke="#2a3ab0" stroke-width="6" stroke-dasharray="1.6 1"/><circle cx="4" cy="3" r="2" fill="none" stroke="#2a3ab0" stroke-width="1.4"/><circle cx="16" cy="22" r="2" fill="none" stroke="#2a3ab0" stroke-width="1.4"/></svg>
<svg class="a" style="left:481px;top:156px;" width="23" height="22" viewBox="0 0 23 22"><ellipse cx="11" cy="11" rx="10" ry="10" fill="#f0d020" stroke="#906010"/><ellipse cx="11" cy="11" rx="5" ry="6" fill="#d0a010" stroke="#604000"/><ellipse cx="11" cy="11" rx="2" ry="3" fill="#fff"/></svg>
<div class="a" style="left:511px;top:154px;width:2px;height:28px;border-left:1px solid #b4b4b8;border-right:1px solid #fbfbfb"></div>
<svg class="a" style="left:517px;top:155px;" width="25" height="24" viewBox="0 0 25 24"><path d="M4,20 q-6,-8 4,-10 q10,-2 14,6 q-4,8 -14,4" fill="none" stroke="#4060c0" stroke-width="2"/><path d="M4,3 L18,16 M16,3 L4,17" stroke="#202020" stroke-width="2"/></svg>
<svg class="a" style="left:547px;top:175px;" width="7" height="4" viewBox="0 0 7 4"><polygon points="0,0 7,0 3.5,4" fill="#000"/></svg>
<div class="a" style="left:656px;top:155px;width:2px;height:26px;background:repeating-linear-gradient(#8c8c90 0 1px,transparent 1px 3px)"></div>
<svg class="a" style="left:663px;top:157px;" width="24" height="20" viewBox="0 0 24 20"><polygon points="12,2 22,18 2,18" fill="none" stroke="#202020" stroke-width="1.6"/></svg>
<svg class="a" style="left:694px;top:156px;" width="23" height="23" viewBox="0 0 23 23"><rect x="1" y="1" width="20" height="17" fill="#fff" stroke="#404080"/><rect x="1" y="1" width="20" height="3" fill="#8060c0"/><path d="M1,8h20M1,12h20M6,4v14M11,4v14M16,4v14" stroke="#808080" stroke-width="0.7"/><polygon points="14,13 20,22 8,22" fill="#fff" stroke="#e02020" stroke-width="1.4"/></svg>
<svg class="a" style="left:724px;top:155px;" width="26" height="24" viewBox="0 0 26 24"><polygon points="1,6 9,6 11,8 24,8 22,22 1,22" fill="#f0d880" stroke="#a08030"/><path d="M7,12h6M10,9v6M14,16h6M17,13v6M15,9h6M18,6v6" stroke="#e02020" stroke-width="1.4"/></svg>
<svg class="a" style="left:755px;top:155px;" width="26" height="24" viewBox="0 0 26 24"><polygon points="1,6 9,6 11,8 24,8 22,22 1,22" fill="#f0d880" stroke="#a08030"/><circle cx="8" cy="16" r="4" fill="none" stroke="#202020" stroke-width="1.3"/><circle cx="18" cy="11" r="4" fill="none" stroke="#202020" stroke-width="1.3"/><circle cx="18" cy="19" r="3.5" fill="none" stroke="#202020" stroke-width="1.3"/></svg>
<svg class="a" style="left:786px;top:175px;" width="7" height="4" viewBox="0 0 7 4"><polygon points="0,0 7,0 3.5,4" fill="#000"/></svg>
<div class="a" style="left:798px;top:154px;width:2px;height:28px;border-left:1px solid #b4b4b8;border-right:1px solid #fbfbfb"></div>
<div class="a" style="left:834px;top:155px;width:2px;height:26px;background:repeating-linear-gradient(#8c8c90 0 1px,transparent 1px 3px)"></div>
<svg class="a" style="left:840px;top:155px;" width="24" height="24" viewBox="0 0 24 24"><rect x="10" y="3" width="10" height="9" fill="#f0c830" stroke="#a08010"/><rect x="2" y="10" width="10" height="11" fill="#f0c830" stroke="#a08010"/><rect x="12" y="12" width="10" height="9" fill="#f8d850" stroke="#a08010"/><path d="M4,12 v-3 a3,3 0 0 1 6,0 v3" fill="none" stroke="#806020" stroke-width="1.4"/></svg>
<svg class="a" style="left:871px;top:155px;" width="24" height="24" viewBox="0 0 24 24"><rect x="10" y="3" width="10" height="9" fill="#f0c830" stroke="#a08010"/><rect x="2" y="10" width="10" height="11" fill="#f0c830" stroke="#a08010"/><rect x="12" y="12" width="10" height="9" fill="#f8d850" stroke="#a08010"/><path d="M4,12 v-3 a3,3 0 0 1 6,0 v3" fill="none" stroke="#806020" stroke-width="1.4"/></svg>
<svg class="a" style="left:901px;top:175px;" width="7" height="4" viewBox="0 0 7 4"><polygon points="0,0 7,0 3.5,4" fill="#000"/></svg>
<div class="a" style="left:912px;top:154px;width:2px;height:28px;border-left:1px solid #b4b4b8;border-right:1px solid #fbfbfb"></div>
<div class="a" style="left:9px;top:189px;width:110px;height:17px;background:#fff;border:1px solid #7a7a7e;border-radius:2px"></div>
<div class="t" style="left:11px;top:190px;font-size:12px;line-height:15px">没有选择过滤器</div>
<div class="a" style="left:101px;top:190px;width:17px;height:15px;background:linear-gradient(#b8d4f8,#5a8ad8);border-left:1px solid #7a9ac0;border-radius:0 2px 2px 0"></div>
<svg class="a" style="left:104px;top:194px;" width="11" height="7" viewBox="0 0 11 7"><polygon points="0,0 11,0 5.5,7" fill="#000"/></svg>
<div class="a" style="left:128px;top:189px;width:115px;height:17px;background:#fff;border:1px solid #7a7a7e;border-radius:2px"></div>
<div class="t" style="left:130px;top:190px;font-size:12px;line-height:15px">整个装配</div>
<div class="a" style="left:225px;top:190px;width:17px;height:15px;background:linear-gradient(#b8d4f8,#5a8ad8);border-left:1px solid #7a9ac0;border-radius:0 2px 2px 0"></div>
<svg class="a" style="left:228px;top:194px;" width="11" height="7" viewBox="0 0 11 7"><polygon points="0,0 11,0 5.5,7" fill="#000"/></svg>
<svg class="a" style="left:250px;top:189px;" width="18" height="18" viewBox="0 0 18 18"><rect x="2" y="5" width="7" height="10" fill="#a0a0a0"/><circle cx="12" cy="9" r="4" fill="none" stroke="#a0a0a0" stroke-width="2"/><circle cx="12" cy="14" r="3" fill="none" stroke="#a0a0a0" stroke-width="2"/></svg>
<div class="a" style="left:273px;top:187px;width:2px;height:22px;border-left:1px solid #b4b4b8;border-right:1px solid #fbfbfb"></div>
<svg class="a" style="left:280px;top:189px;" width="17" height="18" viewBox="0 0 17 18"><path d="M2,5 q5,-4 12,0" stroke="#8898a8" stroke-width="2" fill="none"/><polygon points="6,9 12,9 10,16 8,16" fill="#a0a090"/></svg>
<svg class="a" style="left:303px;top:188px;" width="18" height="19" viewBox="0 0 18 19"><path d="M3,5 q4,-5 9,0" stroke="#203080" stroke-width="1.6" fill="none"/><circle cx="10" cy="12" r="5" fill="none" stroke="#e02020" stroke-width="1.5"/><path d="M4,12h12M10,6v12" stroke="#e02020" stroke-width="1.4"/></svg>
<svg class="a" style="left:325px;top:188px;" width="18" height="19" viewBox="0 0 18 19"><path d="M2,4 q4,-3 9,1" stroke="#506080" stroke-width="2" fill="none"/><rect x="10" y="8" width="6" height="10" fill="#f0d040" stroke="#808080"/><rect x="5" y="6" width="5" height="5" fill="#a0b0d0"/></svg>
<div class="a" style="left:348px;top:187px;width:2px;height:22px;border-left:1px solid #b4b4b8;border-right:1px solid #fbfbfb"></div>
<svg class="a" style="left:353px;top:189px;" width="18" height="17" viewBox="0 0 18 17"><polygon points="2,8 10,3 16,6 16,11 8,15 2,12" fill="#fff" stroke="#303030"/><path d="M6,8 l6,-3" stroke="#e02020" stroke-width="1.5"/></svg>
<svg class="a" style="left:375px;top:188px;" width="20" height="19" viewBox="0 0 20 19"><polygon points="2,6 10,2 18,5 18,15 10,18 2,14" fill="#70b8f0" stroke="#4080c0"/><path d="M2,6 l8,4 l8,-5 M10,10 v8" stroke="#fff" stroke-width="1"/><path d="M4,8h12" stroke="#e02020" stroke-width="1" stroke-dasharray="2 1"/></svg>
<div class="a" style="left:400px;top:187px;width:2px;height:22px;border-left:1px solid #b4b4b8;border-right:1px solid #fbfbfb"></div>
<div class="a" style="left:404px;top:188px;width:22px;height:20px;background:#fff;border:1px solid #707074;border-radius:2px"></div>
<svg class="a" style="left:406px;top:189px;" width="18" height="18" viewBox="0 0 18 18"><path d="M3,15 L15,3" stroke="#202020" stroke-width="1.3"/><circle cx="13" cy="5" r="2" fill="#e02020"/></svg>
<div class="a" style="left:428px;top:188px;width:22px;height:20px;background:#fff;border:1px solid #707074;border-radius:2px"></div>
<svg class="a" style="left:430px;top:189px;" width="18" height="18" viewBox="0 0 18 18"><path d="M3,15 L15,3" stroke="#202020" stroke-width="1.3"/><circle cx="9" cy="9" r="2" fill="#e02020"/></svg>
<svg class="a" style="left:454px;top:189px;" width="17" height="18" viewBox="0 0 17 18"><path d="M3,2 q5,0 5,8 q0,6 6,6" stroke="#202020" stroke-width="1.3" fill="none"/><circle cx="8" cy="10" r="2" fill="#e02020"/></svg>
<svg class="a" style="left:476px;top:189px;" width="17" height="18" viewBox="0 0 17 18"><path d="M1,16 q7,-14 15,0 M8,2 v12" stroke="#202020" stroke-width="1.3" fill="none"/><circle cx="8" cy="9" r="1.8" fill="#e02020"/></svg>
<div class="a" style="left:497px;top:188px;width:22px;height:20px;background:#fff;border:1px solid #707074;border-radius:2px"></div>
<svg class="a" style="left:499px;top:189px;" width="18" height="18" viewBox="0 0 18 18"><circle cx="9" cy="9" r="6.5" fill="none" stroke="#202020" stroke-width="1.3"/><circle cx="9" cy="9" r="2" fill="#e02020"/></svg>
<svg class="a" style="left:521px;top:189px;" width="18" height="18" viewBox="0 0 18 18"><circle cx="9" cy="9" r="6.5" fill="none" stroke="#202020" stroke-width="1.3"/><g fill="#e02020"><circle cx="9" cy="2.5" r="2"/><circle cx="2.5" cy="9" r="2"/><circle cx="15.5" cy="9" r="2"/><circle cx="9" cy="15.5" r="2"/></g></svg>
<div class="a" style="left:542px;top:188px;width:22px;height:20px;background:#fff;border:1px solid #707074;border-radius:2px"></div>
<svg class="a" style="left:544px;top:189px;" width="18" height="18" viewBox="0 0 18 18"><path d="M9,2v14M2,9h14" stroke="#202020" stroke-width="1.3"/><circle cx="9" cy="9" r="1.8" fill="#e02020"/></svg>
<div class="a" style="left:566px;top:188px;width:22px;height:20px;background:#fff;border:1px solid #707074;border-radius:2px"></div>
<svg class="a" style="left:568px;top:189px;" width="18" height="18" viewBox="0 0 18 18"><path d="M3,15 L15,3" stroke="#202020" stroke-width="1.3"/><circle cx="6" cy="12" r="2" fill="#e02020"/></svg>
<svg class="a" style="left:589px;top:189px;" width="18" height="18" viewBox="0 0 18 18"><path d="M2,6 q6,-6 14,-2 v10 q-8,-4 -14,2 z" fill="#70b0f0" stroke="#3070c0"/><circle cx="11" cy="6" r="2" fill="#e02020"/></svg>
<div class="a" style="left:611px;top:187px;width:2px;height:22px;border-left:1px solid #b4b4b8;border-right:1px solid #fbfbfb"></div>
<svg class="a" style="left:621px;top:191px;" width="13" height="14" viewBox="0 0 13 14"><rect x="1" y="1" width="11" height="12" fill="none" stroke="#303030"/><path d="M1,5h11M1,9h11M4.5,1v12M8.5,1v12" stroke="#303030"/><rect x="5" y="5" width="3" height="4" fill="#e02020"/></svg>
<svg class="a" style="left:1473px;top:203px;" width="7" height="4" viewBox="0 0 7 4"><polygon points="0,0 7,0 3.5,4" fill="#000"/></svg>
<div class="a" style="left:693px;top:213px;width:1px;height:20px;background:#a8a8ac;border-right:1px solid #fff"></div>
<div class="t" style="left:697px;top:215px;font-size:12.5px;line-height:15px"><b>体</b></div>
<div class="t" style="left:713px;top:215px;font-size:12px;line-height:15px;letter-spacing:1.5px"><b>(0)</b></div>
<div class="t" style="left:740px;top:215px;font-size:12.5px;line-height:15px"><b>已选定</b></div>
<div class="a" style="left:1386px;top:213px;width:1px;height:20px;background:#b4b4b8"></div>
<div class="a" style="left:1387px;top:213px;width:1px;height:20px;background:#fff"></div>
<div class="a" style="left:1404px;top:213px;width:1px;height:20px;background:#b4b4b8"></div>
<div class="a" style="left:1405px;top:213px;width:1px;height:20px;background:#fff"></div>
<div class="a" style="left:1440px;top:213px;width:1px;height:20px;background:#b4b4b8"></div>
<div class="a" style="left:1441px;top:213px;width:1px;height:20px;background:#fff"></div>
<div class="a" style="left:1445px;top:215px;width:16px;height:16px;background:#8a9a98"></div>
<svg class="a" style="left:1465px;top:215px;" width="16" height="16" viewBox="0 0 16 16"><path d="M1,4 v-3 h3 M12,1 h3 v3 M15,12 v3 h-3 M4,15 h-3 v-3" stroke="#404040" stroke-width="1.4" fill="none"/><rect x="3.5" y="3.5" width="9" height="9" fill="#fff" stroke="#404040" stroke-width="1.2"/><rect x="5" y="6" width="6" height="4" fill="#3080e0"/></svg>
<div class="a" style="left:4px;top:234px;width:33px;height:723px;background:#aaa8ac"></div>
<div class="a" style="left:36px;top:234px;width:1px;height:723px;background:#5c545e"></div>
<div class="a" style="left:37px;top:234px;width:297px;height:723px;background:#e8e8ea"></div>
<div class="a" style="left:334px;top:234px;width:1px;height:723px;background:#6a6a6e"></div>
<div class="a" style="left:335px;top:234px;width:1150px;height:723px;background:#000"></div>
<div class="a" style="left:10px;top:252px;width:27px;height:39px;background:#d6d6d8;border:1px solid #8a8a8e;border-right:none;border-radius:6px 0 0 6px;box-shadow:inset 1px 1px 0 #f4f4f4"></div>
<div class="a" style="left:10px;top:294px;width:27px;height:39px;background:#d6d6d8;border:1px solid #8a8a8e;border-right:none;border-radius:6px 0 0 6px;box-shadow:inset 1px 1px 0 #f4f4f4"></div>
<div class="a" style="left:9px;top:335px;width:29px;height:42px;background:#f2f2f4;border:1px solid #8c8c90;border-right:none;border-radius:6px 0 0 6px"></div>
<div class="a" style="left:10px;top:378px;width:27px;height:39px;background:#d6d6d8;border:1px solid #8a8a8e;border-right:none;border-radius:6px 0 0 6px;box-shadow:inset 1px 1px 0 #f4f4f4"></div>
<div class="a" style="left:10px;top:432px;width:27px;height:39px;background:#d6d6d8;border:1px solid #8a8a8e;border-right:none;border-radius:6px 0 0 6px;box-shadow:inset 1px 1px 0 #f4f4f4"></div>
<div class="a" style="left:10px;top:486px;width:27px;height:39px;background:#d6d6d8;border:1px solid #8a8a8e;border-right:none;border-radius:6px 0 0 6px;box-shadow:inset 1px 1px 0 #f4f4f4"></div>
<div class="a" style="left:10px;top:539px;width:27px;height:41px;background:#d6d6d8;border:1px solid #8a8a8e;border-right:none;border-radius:6px 0 0 6px;box-shadow:inset 1px 1px 0 #f4f4f4"></div>
<div class="a" style="left:10px;top:581px;width:27px;height:41px;background:#d6d6d8;border:1px solid #8a8a8e;border-right:none;border-radius:6px 0 0 6px;box-shadow:inset 1px 1px 0 #f4f4f4"></div>
<div class="a" style="left:10px;top:623px;width:27px;height:41px;background:#d6d6d8;border:1px solid #8a8a8e;border-right:none;border-radius:6px 0 0 6px;box-shadow:inset 1px 1px 0 #f4f4f4"></div>
<div class="a" style="left:10px;top:665px;width:27px;height:41px;background:#d6d6d8;border:1px solid #8a8a8e;border-right:none;border-radius:6px 0 0 6px;box-shadow:inset 1px 1px 0 #f4f4f4"></div>
<div class="a" style="left:10px;top:707px;width:27px;height:41px;background:#d6d6d8;border:1px solid #8a8a8e;border-right:none;border-radius:6px 0 0 6px;box-shadow:inset 1px 1px 0 #f4f4f4"></div>
<div class="a" style="left:10px;top:750px;width:27px;height:40px;background:#d6d6d8;border:1px solid #8a8a8e;border-right:none;border-radius:6px 0 0 6px;box-shadow:inset 1px 1px 0 #f4f4f4"></div>
<svg class="a" style="left:13px;top:258px;" width="22" height="28" viewBox="0 0 22 28"><g fill="#f0c020" stroke="#b08010" stroke-width="0.8"><rect x="3" y="2" width="7" height="7"/><rect x="1" y="9" width="7" height="7"/><rect x="8" y="9" width="7" height="7"/><rect x="10" y="17" width="7" height="7"/></g><path d="M4,16v8h6 M15,11h6" stroke="#2020c0" stroke-width="1.2" fill="none"/></svg>
<svg class="a" style="left:13px;top:300px;" width="22" height="28" viewBox="0 0 22 28"><polygon points="2,2 10,8 2,14" fill="#1818c8"/><polygon points="20,2 12,8 20,14" fill="#1818c8"/><path d="M11,0v28" stroke="#000" stroke-dasharray="2 1.5"/><rect x="1" y="17" width="8" height="9" fill="#f0e040" stroke="#606000" stroke-width="0.8"/><polygon points="12,16 21,26 12,26" fill="#d02020"/></svg>
<svg class="a" style="left:13px;top:342px;" width="22" height="28" viewBox="0 0 22 28"><rect x="2" y="2" width="8" height="8" rx="3" fill="#d060a0" stroke="#802060"/><path d="M4,12v10h6 M13,9h8" stroke="#2020c0" stroke-width="1.2" fill="none"/><circle cx="15" cy="22" r="4" fill="none" stroke="#a02080" stroke-width="1.3"/><circle cx="15" cy="22" r="1.5" fill="#a02080"/></svg>
<svg class="a" style="left:12px;top:385px;" width="24" height="26" viewBox="0 0 24 26"><rect x="1" y="6" width="7" height="18" fill="#f08020" stroke="#804010"/><rect x="8" y="4" width="7" height="20" fill="#30b030" stroke="#106010"/><rect x="15" y="3" width="7" height="21" fill="#3080e0" stroke="#104080"/></svg>
<svg class="a" style="left:12px;top:438px;" width="24" height="28" viewBox="0 0 24 28"><circle cx="9" cy="18" r="8" fill="#2a6ad0"/><text x="7" y="23" font-size="11" font-weight="bold" fill="#fff" font-family="Liberation Serif">i</text><path d="M12,6 q8,2 10,12 M12,2 q11,2 13,16" stroke="#2a6ad0" stroke-width="2.2" fill="none"/></svg>
<svg class="a" style="left:13px;top:491px;" width="22" height="28" viewBox="0 0 22 28"><polygon points="2,2 14,2 20,8 20,26 2,26" fill="#fff" stroke="#4060c0"/><circle cx="11" cy="17" r="6" fill="#30a0e0"/><path d="M7,15 q3,-2 5,1 q2,3 4,1" fill="#30a040"/></svg>
<svg class="a" style="left:12px;top:545px;" width="24" height="28" viewBox="0 0 24 28"><circle cx="12" cy="14" r="10.5" fill="#cfe0f4" stroke="#506080" stroke-width="1.4"/><circle cx="12" cy="14" r="8" fill="#fff"/><path d="M12,8v6h5" stroke="#000" stroke-width="1.6" fill="none"/></svg>
<svg class="a" style="left:12px;top:587px;" width="24" height="28" viewBox="0 0 24 28"><polygon points="2,4 8,2 8,26 2,24" fill="#fff" stroke="#606060"/><rect x="8" y="4" width="14" height="20" fill="#fff" stroke="#606060"/><circle cx="11" cy="9" r="2" fill="#3050e0"/><circle cx="11" cy="14" r="2" fill="#30a030"/><circle cx="11" cy="19" r="2" fill="#e03030"/><path d="M14,9h6M14,14h6M14,19h6" stroke="#404040"/></svg>
<svg class="a" style="left:12px;top:629px;" width="24" height="28" viewBox="0 0 24 28"><defs><linearGradient id="rb" x1="0" y1="0" x2="0" y2="1"><stop offset="0" stop-color="#e02020"/><stop offset="0.3" stop-color="#f0e020"/><stop offset="0.6" stop-color="#20c040"/><stop offset="1" stop-color="#2040e0"/></linearGradient></defs><rect x="2" y="3" width="8" height="22" fill="url(#rb)"/><path d="M11,6 L20,22" stroke="#202020" stroke-width="2.2"/><circle cx="10" cy="5" r="2" fill="#fff"/></svg>
<svg class="a" style="left:12px;top:671px;" width="24" height="28" viewBox="0 0 24 28"><path d="M3,3 v18 M6,4 v17 M3,21 l8,2 l8,-4" stroke="#3070d0" stroke-width="2" fill="none"/><path d="M4,8 h16 l-12,8" stroke="#3070d0" stroke-width="1.2" fill="none"/><path d="M12,6 L21,22" stroke="#202020" stroke-width="2.2"/></svg>
<svg class="a" style="left:11px;top:713px;" width="26" height="28" viewBox="0 0 26 28"><circle cx="19" cy="8" r="5" fill="#e8b070"/><path d="M11,22 q0,-8 8,-8 q8,0 8,8 z" fill="#30a030"/><circle cx="9" cy="14" r="5" fill="#b07040"/><path d="M1,27 q0,-8 8,-8 q8,0 8,8 z" fill="#9050c0"/></svg>
<svg class="a" style="left:12px;top:755px;" width="24" height="28" viewBox="0 0 24 28"><polygon points="2,4 8,2 8,26 2,24" fill="#fff" stroke="#606060"/><rect x="8" y="5" width="14" height="18" fill="#fff" stroke="#606060"/><rect x="10" y="7" width="10" height="12" fill="#e02020"/><polygon points="10,19 15,13 20,19" fill="#f0c040"/><rect x="10" y="7" width="10" height="3" fill="#3060e0"/></svg>
<div class="a" style="left:37px;top:234px;width:1px;height:723px;background:#fafafa"></div>
<svg class="a" style="left:51px;top:242px;" width="13" height="13" viewBox="0 0 13 13"><ellipse cx="7" cy="6" rx="5" ry="4" fill="#f0e040" stroke="#000" stroke-width="1.2"/><path d="M2,11 l4,-3" stroke="#000" stroke-width="1.6"/></svg>
<div class="t" style="left:75px;top:242px;font-size:13px;line-height:15px"><b>部件导航器</b></div>
<div class="a" style="left:46px;top:265px;width:278px;height:674px;background:#fff;border:1px solid #808084"></div>
<div class="a" style="left:47px;top:266px;width:258px;height:16px;background:linear-gradient(#f6f6f8,#d8d8dc);border-bottom:1px solid #a0a0a4"></div>
<div class="a" style="left:305px;top:266px;width:18px;height:16px;background:linear-gradient(#f6f6f8,#d8d8dc);border-bottom:1px solid #a0a0a4"></div>
<div class="a" style="left:247px;top:267px;width:1px;height:15px;background:#b0b0b4"></div>
<div class="t" style="left:54px;top:267px;font-size:12px">名称</div>
<svg class="a" style="left:92px;top:270px;" width="12" height="7" viewBox="0 0 12 7"><polygon points="0,7 12,7 6,0" fill="#202020"/></svg>
<div class="t" style="left:254px;top:267px;font-size:12px">附注</div>
<div class="a" style="left:47px;top:302px;width:258px;height:20px;background:#f2f2f2;border-bottom:1px solid #e4e4e4"></div>
<div class="a" style="left:47px;top:322px;width:258px;height:20px;background:#ffffff;border-bottom:1px solid #e4e4e4"></div>
<div class="a" style="left:47px;top:342px;width:258px;height:20px;background:#f2f2f2;border-bottom:1px solid #e4e4e4"></div>
<div class="a" style="left:47px;top:362px;width:258px;height:20px;background:#ffffff;border-bottom:1px solid #e4e4e4"></div>
<div class="a" style="left:47px;top:382px;width:258px;height:20px;background:#f2f2f2;border-bottom:1px solid #e4e4e4"></div>
<div class="a" style="left:47px;top:402px;width:258px;height:20px;background:#ffffff;border-bottom:1px solid #e4e4e4"></div>
<div class="a" style="left:47px;top:422px;width:258px;height:20px;background:#f2f2f2;border-bottom:1px solid #e4e4e4"></div>
<div class="a" style="left:47px;top:442px;width:258px;height:20px;background:#ffffff;border-bottom:1px solid #e4e4e4"></div>
<div class="a" style="left:47px;top:462px;width:258px;height:20px;background:#f2f2f2;border-bottom:1px solid #e4e4e4"></div>
<div class="a" style="left:47px;top:482px;width:258px;height:20px;background:#ffffff;border-bottom:1px solid #e4e4e4"></div>
<div class="a" style="left:47px;top:502px;width:258px;height:20px;background:#f2f2f2;border-bottom:1px solid #e4e4e4"></div>
<div class="a" style="left:47px;top:522px;width:258px;height:20px;background:#ffffff;border-bottom:1px solid #e4e4e4"></div>
<div class="a" style="left:47px;top:542px;width:258px;height:20px;background:#f2f2f2;border-bottom:1px solid #e4e4e4"></div>
<div class="a" style="left:47px;top:562px;width:258px;height:20px;background:#ffffff;border-bottom:1px solid #e4e4e4"></div>
<div class="a" style="left:47px;top:582px;width:258px;height:20px;background:#f2f2f2;border-bottom:1px solid #e4e4e4"></div>
<div class="a" style="left:47px;top:602px;width:258px;height:20px;background:#ffffff;border-bottom:1px solid #e4e4e4"></div>
<div class="a" style="left:47px;top:622px;width:258px;height:20px;background:#f2f2f2;border-bottom:1px solid #e4e4e4"></div>
<div class="a" style="left:47px;top:642px;width:258px;height:20px;background:#ffffff;border-bottom:1px solid #e4e4e4"></div>
<div class="a" style="left:47px;top:662px;width:258px;height:20px;background:#f2f2f2;border-bottom:1px solid #e4e4e4"></div>
<div class="a" style="left:47px;top:682px;width:258px;height:20px;background:#ffffff;border-bottom:1px solid #e4e4e4"></div>
<div class="a" style="left:47px;top:702px;width:258px;height:20px;background:#f2f2f2;border-bottom:1px solid #e4e4e4"></div>
<div class="a" style="left:47px;top:722px;width:258px;height:20px;background:#ffffff;border-bottom:1px solid #e4e4e4"></div>
<div class="a" style="left:47px;top:742px;width:258px;height:20px;background:#f2f2f2;border-bottom:1px solid #e4e4e4"></div>
<div class="a" style="left:47px;top:762px;width:258px;height:20px;background:#ffffff;border-bottom:1px solid #e4e4e4"></div>
<div class="a" style="left:47px;top:782px;width:258px;height:20px;background:#f2f2f2;border-bottom:1px solid #e4e4e4"></div>
<div class="a" style="left:47px;top:802px;width:258px;height:20px;background:#ffffff;border-bottom:1px solid #e4e4e4"></div>
<div class="a" style="left:47px;top:822px;width:258px;height:20px;background:#f2f2f2;border-bottom:1px solid #e4e4e4"></div>
<div class="a" style="left:47px;top:842px;width:258px;height:20px;background:#ffffff;border-bottom:1px solid #e4e4e4"></div>
<div class="a" style="left:47px;top:862px;width:258px;height:20px;background:#f2f2f2;border-bottom:1px solid #e4e4e4"></div>
<div class="a" style="left:47px;top:882px;width:258px;height:20px;background:#ffffff;border-bottom:1px solid #e4e4e4"></div>
<div class="a" style="left:47px;top:902px;width:258px;height:20px;background:#f2f2f2;border-bottom:1px solid #e4e4e4"></div>
<div class="a" style="left:247px;top:282px;width:1px;height:638px;background:repeating-linear-gradient(#c8c8cc 0 1px,transparent 1px 2px)"></div>
<div class="a" style="left:57px;top:282px;width:1px;height:12px;background:repeating-linear-gradient(#a0a0a0 0 1px,transparent 1px 2px)"></div>
<div class="a" style="left:77px;top:302px;width:1px;height:618px;background:repeating-linear-gradient(#a0a0a0 0 1px,transparent 1px 2px)"></div>
<div class="a" style="left:52px;top:288px;width:9px;height:9px;border:1px solid #909090;background:#fff;border-radius:1px"></div>
<div class="a" style="left:54px;top:292px;width:5px;height:1px;background:#303030"></div>
<svg class="a" style="left:66px;top:287px;" width="18" height="15" viewBox="0 0 18 15"><polygon points="1,2 7,2 8,4 15,4 15,13 1,13" fill="#e0b030"/><polygon points="3,7 17,7 14,14 1,14" fill="#f8d850" stroke="#c09020" stroke-width="0.6"/></svg>
<div class="t" style="left:86px;top:287px;font-size:12px">模型历史记录</div>
<div class="a" style="left:119px;top:302px;width:186px;height:20px;background:#3399ff;border-top:1px dotted #e08020;border-bottom:1px dotted #e08020"></div>
<div class="a" style="left:78px;top:312px;width:9px;height:1px;background:repeating-linear-gradient(90deg,#a0a0a0 0 1px,transparent 1px 2px)"></div>
<svg class="a" style="left:88px;top:306px;" width="13" height="13" viewBox="0 0 13 13"><rect x="0.5" y="0.5" width="12" height="12" fill="#fff" stroke="#101010"/><path d="M2.5,6.5 l3,3 l5,-7" stroke="#10b030" stroke-width="2.4" fill="none"/></svg>
<svg class="a" style="left:101px;top:303px;" width="18" height="19" viewBox="0 0 18 19"><circle cx="5" cy="5" r="4" fill="#fff" stroke="#e02020" stroke-width="1.8"/><path d="M2,8 L8,2" stroke="#e02020" stroke-width="1.5"/><path d="M10,1 v6 h5 M10,4h4" stroke="#202020" stroke-width="1.2" fill="none"/><polygon points="4,11 11,8 17,11 17,15 11,18 4,15" fill="#3a70d8"/><polygon points="4,11 11,8 17,11 11,13" fill="#90b8f0"/><rect x="9" y="6" width="4" height="6" fill="#5a90f0"/></svg>
<div class="t" style="left:121px;top:305px;font-size:12px;color:#fff">体</div>
<div class="t" style="left:140px;top:306px;font-size:11px;color:#fff;letter-spacing:1.6px">(0)</div>
<div class="a" style="left:78px;top:332px;width:9px;height:1px;background:repeating-linear-gradient(90deg,#a0a0a0 0 1px,transparent 1px 2px)"></div>
<svg class="a" style="left:88px;top:326px;" width="13" height="13" viewBox="0 0 13 13"><rect x="0.5" y="0.5" width="12" height="12" fill="#fff" stroke="#101010"/><path d="M2.5,6.5 l3,3 l5,-7" stroke="#10b030" stroke-width="2.4" fill="none"/></svg>
<svg class="a" style="left:101px;top:323px;" width="18" height="19" viewBox="0 0 18 19"><circle cx="5" cy="5" r="4" fill="#fff" stroke="#e02020" stroke-width="1.8"/><path d="M2,8 L8,2" stroke="#e02020" stroke-width="1.5"/><path d="M10,1 v6 h5 M10,4h4" stroke="#202020" stroke-width="1.2" fill="none"/><polygon points="4,11 11,8 17,11 17,15 11,18 4,15" fill="#3a70d8"/><polygon points="4,11 11,8 17,11 11,13" fill="#90b8f0"/><rect x="9" y="6" width="4" height="6" fill="#5a90f0"/></svg>
<div class="t" style="left:121px;top:325px;font-size:12px;color:#000">体</div>
<div class="t" style="left:140px;top:326px;font-size:11px;color:#000;letter-spacing:1.6px">(1)</div>
<div class="a" style="left:78px;top:352px;width:9px;height:1px;background:repeating-linear-gradient(90deg,#a0a0a0 0 1px,transparent 1px 2px)"></div>
<svg class="a" style="left:88px;top:346px;" width="13" height="13" viewBox="0 0 13 13"><rect x="0.5" y="0.5" width="12" height="12" fill="#fff" stroke="#101010"/><path d="M2.5,6.5 l3,3 l5,-7" stroke="#10b030" stroke-width="2.4" fill="none"/></svg>
<svg class="a" style="left:101px;top:343px;" width="18" height="19" viewBox="0 0 18 19"><circle cx="5" cy="5" r="4" fill="#fff" stroke="#e02020" stroke-width="1.8"/><path d="M2,8 L8,2" stroke="#e02020" stroke-width="1.5"/><path d="M10,1 v6 h5 M10,4h4" stroke="#202020" stroke-width="1.2" fill="none"/><polygon points="4,11 11,8 17,11 17,15 11,18 4,15" fill="#3a70d8"/><polygon points="4,11 11,8 17,11 11,13" fill="#90b8f0"/><rect x="9" y="6" width="4" height="6" fill="#5a90f0"/></svg>
<div class="t" style="left:121px;top:345px;font-size:12px;color:#000">体</div>
<div class="t" style="left:140px;top:346px;font-size:11px;color:#000;letter-spacing:1.6px">(2)</div>
<div class="a" style="left:78px;top:372px;width:9px;height:1px;background:repeating-linear-gradient(90deg,#a0a0a0 0 1px,transparent 1px 2px)"></div>
<svg class="a" style="left:88px;top:366px;" width="13" height="13" viewBox="0 0 13 13"><rect x="0.5" y="0.5" width="12" height="12" fill="#fff" stroke="#101010"/><path d="M2.5,6.5 l3,3 l5,-7" stroke="#10b030" stroke-width="2.4" fill="none"/></svg>
<svg class="a" style="left:101px;top:363px;" width="18" height="19" viewBox="0 0 18 19"><circle cx="5" cy="5" r="4" fill="#fff" stroke="#e02020" stroke-width="1.8"/><path d="M2,8 L8,2" stroke="#e02020" stroke-width="1.5"/><path d="M10,1 v6 h5 M10,4h4" stroke="#202020" stroke-width="1.2" fill="none"/><polygon points="4,11 11,8 17,11 17,15 11,18 4,15" fill="#3a70d8"/><polygon points="4,11 11,8 17,11 11,13" fill="#90b8f0"/><rect x="9" y="6" width="4" height="6" fill="#5a90f0"/></svg>
<div class="t" style="left:121px;top:365px;font-size:12px;color:#000">体</div>
<div class="t" style="left:140px;top:366px;font-size:11px;color:#000;letter-spacing:1.6px">(3)</div>
<div class="a" style="left:78px;top:392px;width:9px;height:1px;background:repeating-linear-gradient(90deg,#a0a0a0 0 1px,transparent 1px 2px)"></div>
<svg class="a" style="left:88px;top:386px;" width="13" height="13" viewBox="0 0 13 13"><rect x="0.5" y="0.5" width="12" height="12" fill="#fff" stroke="#101010"/><path d="M2.5,6.5 l3,3 l5,-7" stroke="#10b030" stroke-width="2.4" fill="none"/></svg>
<svg class="a" style="left:101px;top:383px;" width="18" height="19" viewBox="0 0 18 19"><circle cx="5" cy="5" r="4" fill="#fff" stroke="#e02020" stroke-width="1.8"/><path d="M2,8 L8,2" stroke="#e02020" stroke-width="1.5"/><path d="M10,1 v6 h5 M10,4h4" stroke="#202020" stroke-width="1.2" fill="none"/><polygon points="4,11 11,8 17,11 17,15 11,18 4,15" fill="#3a70d8"/><polygon points="4,11 11,8 17,11 11,13" fill="#90b8f0"/><rect x="9" y="6" width="4" height="6" fill="#5a90f0"/></svg>
<div class="t" style="left:121px;top:385px;font-size:12px;color:#000">体</div>
<div class="t" style="left:140px;top:386px;font-size:11px;color:#000;letter-spacing:1.6px">(4)</div>
<div class="a" style="left:78px;top:412px;width:9px;height:1px;background:repeating-linear-gradient(90deg,#a0a0a0 0 1px,transparent 1px 2px)"></div>
<svg class="a" style="left:88px;top:406px;" width="13" height="13" viewBox="0 0 13 13"><rect x="0.5" y="0.5" width="12" height="12" fill="#fff" stroke="#101010"/><path d="M2.5,6.5 l3,3 l5,-7" stroke="#10b030" stroke-width="2.4" fill="none"/></svg>
<svg class="a" style="left:101px;top:403px;" width="18" height="19" viewBox="0 0 18 19"><circle cx="5" cy="5" r="4" fill="#fff" stroke="#e02020" stroke-width="1.8"/><path d="M2,8 L8,2" stroke="#e02020" stroke-width="1.5"/><path d="M10,1 v6 h5 M10,4h4" stroke="#202020" stroke-width="1.2" fill="none"/><polygon points="4,11 11,8 17,11 17,15 11,18 4,15" fill="#3a70d8"/><polygon points="4,11 11,8 17,11 11,13" fill="#90b8f0"/><rect x="9" y="6" width="4" height="6" fill="#5a90f0"/></svg>
<div class="t" style="left:121px;top:405px;font-size:12px;color:#000">体</div>
<div class="t" style="left:140px;top:406px;font-size:11px;color:#000;letter-spacing:1.6px">(5)</div>
<div class="a" style="left:78px;top:432px;width:9px;height:1px;background:repeating-linear-gradient(90deg,#a0a0a0 0 1px,transparent 1px 2px)"></div>
<svg class="a" style="left:88px;top:426px;" width="13" height="13" viewBox="0 0 13 13"><rect x="0.5" y="0.5" width="12" height="12" fill="#fff" stroke="#101010"/><path d="M2.5,6.5 l3,3 l5,-7" stroke="#10b030" stroke-width="2.4" fill="none"/></svg>
<svg class="a" style="left:101px;top:423px;" width="18" height="19" viewBox="0 0 18 19"><circle cx="5" cy="5" r="4" fill="#fff" stroke="#e02020" stroke-width="1.8"/><path d="M2,8 L8,2" stroke="#e02020" stroke-width="1.5"/><path d="M10,1 v6 h5 M10,4h4" stroke="#202020" stroke-width="1.2" fill="none"/><polygon points="4,11 11,8 17,11 17,15 11,18 4,15" fill="#3a70d8"/><polygon points="4,11 11,8 17,11 11,13" fill="#90b8f0"/><rect x="9" y="6" width="4" height="6" fill="#5a90f0"/></svg>
<div class="t" style="left:121px;top:425px;font-size:12px;color:#000">体</div>
<div class="t" style="left:140px;top:426px;font-size:11px;color:#000;letter-spacing:1.6px">(6)</div>
<div class="a" style="left:78px;top:452px;width:9px;height:1px;background:repeating-linear-gradient(90deg,#a0a0a0 0 1px,transparent 1px 2px)"></div>
<svg class="a" style="left:88px;top:446px;" width="13" height="13" viewBox="0 0 13 13"><rect x="0.5" y="0.5" width="12" height="12" fill="#fff" stroke="#101010"/><path d="M2.5,6.5 l3,3 l5,-7" stroke="#10b030" stroke-width="2.4" fill="none"/></svg>
<svg class="a" style="left:101px;top:443px;" width="18" height="19" viewBox="0 0 18 19"><circle cx="5" cy="5" r="4" fill="#fff" stroke="#e02020" stroke-width="1.8"/><path d="M2,8 L8,2" stroke="#e02020" stroke-width="1.5"/><path d="M10,1 v6 h5 M10,4h4" stroke="#202020" stroke-width="1.2" fill="none"/><polygon points="4,11 11,8 17,11 17,15 11,18 4,15" fill="#3a70d8"/><polygon points="4,11 11,8 17,11 11,13" fill="#90b8f0"/><rect x="9" y="6" width="4" height="6" fill="#5a90f0"/></svg>
<div class="t" style="left:121px;top:445px;font-size:12px;color:#000">体</div>
<div class="t" style="left:140px;top:446px;font-size:11px;color:#000;letter-spacing:1.6px">(7)</div>
<div class="a" style="left:78px;top:472px;width:9px;height:1px;background:repeating-linear-gradient(90deg,#a0a0a0 0 1px,transparent 1px 2px)"></div>
<svg class="a" style="left:88px;top:466px;" width="13" height="13" viewBox="0 0 13 13"><rect x="0.5" y="0.5" width="12" height="12" fill="#fff" stroke="#101010"/><path d="M2.5,6.5 l3,3 l5,-7" stroke="#10b030" stroke-width="2.4" fill="none"/></svg>
<svg class="a" style="left:101px;top:463px;" width="18" height="19" viewBox="0 0 18 19"><circle cx="5" cy="5" r="4" fill="#fff" stroke="#e02020" stroke-width="1.8"/><path d="M2,8 L8,2" stroke="#e02020" stroke-width="1.5"/><path d="M10,1 v6 h5 M10,4h4" stroke="#202020" stroke-width="1.2" fill="none"/><polygon points="4,11 11,8 17,11 17,15 11,18 4,15" fill="#3a70d8"/><polygon points="4,11 11,8 17,11 11,13" fill="#90b8f0"/><rect x="9" y="6" width="4" height="6" fill="#5a90f0"/></svg>
<div class="t" style="left:121px;top:465px;font-size:12px;color:#000">体</div>
<div class="t" style="left:140px;top:466px;font-size:11px;color:#000;letter-spacing:1.6px">(8)</div>
<div class="a" style="left:78px;top:492px;width:9px;height:1px;background:repeating-linear-gradient(90deg,#a0a0a0 0 1px,transparent 1px 2px)"></div>
<svg class="a" style="left:88px;top:486px;" width="13" height="13" viewBox="0 0 13 13"><rect x="0.5" y="0.5" width="12" height="12" fill="#fff" stroke="#101010"/><path d="M2.5,6.5 l3,3 l5,-7" stroke="#10b030" stroke-width="2.4" fill="none"/></svg>
<svg class="a" style="left:101px;top:483px;" width="18" height="19" viewBox="0 0 18 19"><circle cx="5" cy="5" r="4" fill="#fff" stroke="#e02020" stroke-width="1.8"/><path d="M2,8 L8,2" stroke="#e02020" stroke-width="1.5"/><path d="M10,1 v6 h5 M10,4h4" stroke="#202020" stroke-width="1.2" fill="none"/><polygon points="4,11 11,8 17,11 17,15 11,18 4,15" fill="#3a70d8"/><polygon points="4,11 11,8 17,11 11,13" fill="#90b8f0"/><rect x="9" y="6" width="4" height="6" fill="#5a90f0"/></svg>
<div class="t" style="left:121px;top:485px;font-size:12px;color:#000">体</div>
<div class="t" style="left:140px;top:486px;font-size:11px;color:#000;letter-spacing:1.6px">(9)</div>
<div class="a" style="left:78px;top:512px;width:9px;height:1px;background:repeating-linear-gradient(90deg,#a0a0a0 0 1px,transparent 1px 2px)"></div>
<svg class="a" style="left:88px;top:506px;" width="13" height="13" viewBox="0 0 13 13"><rect x="0.5" y="0.5" width="12" height="12" fill="#fff" stroke="#101010"/><path d="M2.5,6.5 l3,3 l5,-7" stroke="#10b030" stroke-width="2.4" fill="none"/></svg>
<svg class="a" style="left:101px;top:503px;" width="18" height="19" viewBox="0 0 18 19"><circle cx="5" cy="5" r="4" fill="#fff" stroke="#e02020" stroke-width="1.8"/><path d="M2,8 L8,2" stroke="#e02020" stroke-width="1.5"/><path d="M10,1 v6 h5 M10,4h4" stroke="#202020" stroke-width="1.2" fill="none"/><polygon points="4,11 11,8 17,11 17,15 11,18 4,15" fill="#3a70d8"/><polygon points="4,11 11,8 17,11 11,13" fill="#90b8f0"/><rect x="9" y="6" width="4" height="6" fill="#5a90f0"/></svg>
<div class="t" style="left:121px;top:505px;font-size:12px;color:#000">体</div>
<div class="t" style="left:140px;top:506px;font-size:11px;color:#000;letter-spacing:1.6px">(10)</div>
<div class="a" style="left:78px;top:532px;width:9px;height:1px;background:repeating-linear-gradient(90deg,#a0a0a0 0 1px,transparent 1px 2px)"></div>
<svg class="a" style="left:88px;top:526px;" width="13" height="13" viewBox="0 0 13 13"><rect x="0.5" y="0.5" width="12" height="12" fill="#fff" stroke="#101010"/><path d="M2.5,6.5 l3,3 l5,-7" stroke="#10b030" stroke-width="2.4" fill="none"/></svg>
<svg class="a" style="left:101px;top:523px;" width="18" height="19" viewBox="0 0 18 19"><circle cx="5" cy="5" r="4" fill="#fff" stroke="#e02020" stroke-width="1.8"/><path d="M2,8 L8,2" stroke="#e02020" stroke-width="1.5"/><path d="M10,1 v6 h5 M10,4h4" stroke="#202020" stroke-width="1.2" fill="none"/><polygon points="4,11 11,8 17,11 17,15 11,18 4,15" fill="#3a70d8"/><polygon points="4,11 11,8 17,11 11,13" fill="#90b8f0"/><rect x="9" y="6" width="4" height="6" fill="#5a90f0"/></svg>
<div class="t" style="left:121px;top:525px;font-size:12px;color:#000">体</div>
<div class="t" style="left:140px;top:526px;font-size:11px;color:#000;letter-spacing:1.6px">(11)</div>
<div class="a" style="left:78px;top:552px;width:9px;height:1px;background:repeating-linear-gradient(90deg,#a0a0a0 0 1px,transparent 1px 2px)"></div>
<svg class="a" style="left:88px;top:546px;" width="13" height="13" viewBox="0 0 13 13"><rect x="0.5" y="0.5" width="12" height="12" fill="#fff" stroke="#101010"/><path d="M2.5,6.5 l3,3 l5,-7" stroke="#10b030" stroke-width="2.4" fill="none"/></svg>
<svg class="a" style="left:101px;top:543px;" width="18" height="19" viewBox="0 0 18 19"><circle cx="5" cy="5" r="4" fill="#fff" stroke="#e02020" stroke-width="1.8"/><path d="M2,8 L8,2" stroke="#e02020" stroke-width="1.5"/><path d="M10,1 v6 h5 M10,4h4" stroke="#202020" stroke-width="1.2" fill="none"/><polygon points="4,11 11,8 17,11 17,15 11,18 4,15" fill="#3a70d8"/><polygon points="4,11 11,8 17,11 11,13" fill="#90b8f0"/><rect x="9" y="6" width="4" height="6" fill="#5a90f0"/></svg>
<div class="t" style="left:121px;top:545px;font-size:12px;color:#000">体</div>
<div class="t" style="left:140px;top:546px;font-size:11px;color:#000;letter-spacing:1.6px">(12)</div>
<div class="a" style="left:78px;top:572px;width:9px;height:1px;background:repeating-linear-gradient(90deg,#a0a0a0 0 1px,transparent 1px 2px)"></div>
<svg class="a" style="left:88px;top:566px;" width="13" height="13" viewBox="0 0 13 13"><rect x="0.5" y="0.5" width="12" height="12" fill="#fff" stroke="#101010"/><path d="M2.5,6.5 l3,3 l5,-7" stroke="#10b030" stroke-width="2.4" fill="none"/></svg>
<svg class="a" style="left:101px;top:563px;" width="18" height="19" viewBox="0 0 18 19"><circle cx="5" cy="5" r="4" fill="#fff" stroke="#e02020" stroke-width="1.8"/><path d="M2,8 L8,2" stroke="#e02020" stroke-width="1.5"/><path d="M10,1 v6 h5 M10,4h4" stroke="#202020" stroke-width="1.2" fill="none"/><polygon points="4,11 11,8 17,11 17,15 11,18 4,15" fill="#3a70d8"/><polygon points="4,11 11,8 17,11 11,13" fill="#90b8f0"/><rect x="9" y="6" width="4" height="6" fill="#5a90f0"/></svg>
<div class="t" style="left:121px;top:565px;font-size:12px;color:#000">体</div>
<div class="t" style="left:140px;top:566px;font-size:11px;color:#000;letter-spacing:1.6px">(13)</div>
<div class="a" style="left:78px;top:592px;width:9px;height:1px;background:repeating-linear-gradient(90deg,#a0a0a0 0 1px,transparent 1px 2px)"></div>
<svg class="a" style="left:88px;top:586px;" width="13" height="13" viewBox="0 0 13 13"><rect x="0.5" y="0.5" width="12" height="12" fill="#fff" stroke="#101010"/><path d="M2.5,6.5 l3,3 l5,-7" stroke="#10b030" stroke-width="2.4" fill="none"/></svg>
<svg class="a" style="left:101px;top:583px;" width="18" height="19" viewBox="0 0 18 19"><circle cx="5" cy="5" r="4" fill="#fff" stroke="#e02020" stroke-width="1.8"/><path d="M2,8 L8,2" stroke="#e02020" stroke-width="1.5"/><path d="M10,1 v6 h5 M10,4h4" stroke="#202020" stroke-width="1.2" fill="none"/><polygon points="4,11 11,8 17,11 17,15 11,18 4,15" fill="#3a70d8"/><polygon points="4,11 11,8 17,11 11,13" fill="#90b8f0"/><rect x="9" y="6" width="4" height="6" fill="#5a90f0"/></svg>
<div class="t" style="left:121px;top:585px;font-size:12px;color:#000">体</div>
<div class="t" style="left:140px;top:586px;font-size:11px;color:#000;letter-spacing:1.6px">(14)</div>
<div class="a" style="left:78px;top:612px;width:9px;height:1px;background:repeating-linear-gradient(90deg,#a0a0a0 0 1px,transparent 1px 2px)"></div>
<svg class="a" style="left:88px;top:606px;" width="13" height="13" viewBox="0 0 13 13"><rect x="0.5" y="0.5" width="12" height="12" fill="#fff" stroke="#101010"/><path d="M2.5,6.5 l3,3 l5,-7" stroke="#10b030" stroke-width="2.4" fill="none"/></svg>
<svg class="a" style="left:101px;top:603px;" width="18" height="19" viewBox="0 0 18 19"><circle cx="5" cy="5" r="4" fill="#fff" stroke="#e02020" stroke-width="1.8"/><path d="M2,8 L8,2" stroke="#e02020" stroke-width="1.5"/><path d="M10,1 v6 h5 M10,4h4" stroke="#202020" stroke-width="1.2" fill="none"/><polygon points="4,11 11,8 17,11 17,15 11,18 4,15" fill="#3a70d8"/><polygon points="4,11 11,8 17,11 11,13" fill="#90b8f0"/><rect x="9" y="6" width="4" height="6" fill="#5a90f0"/></svg>
<div class="t" style="left:121px;top:605px;font-size:12px;color:#000">体</div>
<div class="t" style="left:140px;top:606px;font-size:11px;color:#000;letter-spacing:1.6px">(15)</div>
<div class="a" style="left:78px;top:632px;width:9px;height:1px;background:repeating-linear-gradient(90deg,#a0a0a0 0 1px,transparent 1px 2px)"></div>
<svg class="a" style="left:88px;top:626px;" width="13" height="13" viewBox="0 0 13 13"><rect x="0.5" y="0.5" width="12" height="12" fill="#fff" stroke="#101010"/><path d="M2.5,6.5 l3,3 l5,-7" stroke="#10b030" stroke-width="2.4" fill="none"/></svg>
<svg class="a" style="left:101px;top:623px;" width="18" height="19" viewBox="0 0 18 19"><circle cx="5" cy="5" r="4" fill="#fff" stroke="#e02020" stroke-width="1.8"/><path d="M2,8 L8,2" stroke="#e02020" stroke-width="1.5"/><path d="M10,1 v6 h5 M10,4h4" stroke="#202020" stroke-width="1.2" fill="none"/><polygon points="4,11 11,8 17,11 17,15 11,18 4,15" fill="#3a70d8"/><polygon points="4,11 11,8 17,11 11,13" fill="#90b8f0"/><rect x="9" y="6" width="4" height="6" fill="#5a90f0"/></svg>
<div class="t" style="left:121px;top:625px;font-size:12px;color:#000">体</div>
<div class="t" style="left:140px;top:626px;font-size:11px;color:#000;letter-spacing:1.6px">(16)</div>
<div class="a" style="left:78px;top:652px;width:9px;height:1px;background:repeating-linear-gradient(90deg,#a0a0a0 0 1px,transparent 1px 2px)"></div>
<svg class="a" style="left:88px;top:646px;" width="13" height="13" viewBox="0 0 13 13"><rect x="0.5" y="0.5" width="12" height="12" fill="#fff" stroke="#101010"/><path d="M2.5,6.5 l3,3 l5,-7" stroke="#10b030" stroke-width="2.4" fill="none"/></svg>
<svg class="a" style="left:101px;top:643px;" width="18" height="19" viewBox="0 0 18 19"><circle cx="5" cy="5" r="4" fill="#fff" stroke="#e02020" stroke-width="1.8"/><path d="M2,8 L8,2" stroke="#e02020" stroke-width="1.5"/><path d="M10,1 v6 h5 M10,4h4" stroke="#202020" stroke-width="1.2" fill="none"/><polygon points="4,11 11,8 17,11 17,15 11,18 4,15" fill="#3a70d8"/><polygon points="4,11 11,8 17,11 11,13" fill="#90b8f0"/><rect x="9" y="6" width="4" height="6" fill="#5a90f0"/></svg>
<div class="t" style="left:121px;top:645px;font-size:12px;color:#000">体</div>
<div class="t" style="left:140px;top:646px;font-size:11px;color:#000;letter-spacing:1.6px">(17)</div>
<div class="a" style="left:78px;top:672px;width:9px;height:1px;background:repeating-linear-gradient(90deg,#a0a0a0 0 1px,transparent 1px 2px)"></div>
<svg class="a" style="left:88px;top:666px;" width="13" height="13" viewBox="0 0 13 13"><rect x="0.5" y="0.5" width="12" height="12" fill="#fff" stroke="#101010"/><path d="M2.5,6.5 l3,3 l5,-7" stroke="#10b030" stroke-width="2.4" fill="none"/></svg>
<svg class="a" style="left:101px;top:663px;" width="18" height="19" viewBox="0 0 18 19"><circle cx="5" cy="5" r="4" fill="#fff" stroke="#e02020" stroke-width="1.8"/><path d="M2,8 L8,2" stroke="#e02020" stroke-width="1.5"/><path d="M10,1 v6 h5 M10,4h4" stroke="#202020" stroke-width="1.2" fill="none"/><polygon points="4,11 11,8 17,11 17,15 11,18 4,15" fill="#3a70d8"/><polygon points="4,11 11,8 17,11 11,13" fill="#90b8f0"/><rect x="9" y="6" width="4" height="6" fill="#5a90f0"/></svg>
<div class="t" style="left:121px;top:665px;font-size:12px;color:#000">体</div>
<div class="t" style="left:140px;top:666px;font-size:11px;color:#000;letter-spacing:1.6px">(18)</div>
<div class="a" style="left:78px;top:692px;width:9px;height:1px;background:repeating-linear-gradient(90deg,#a0a0a0 0 1px,transparent 1px 2px)"></div>
<svg class="a" style="left:88px;top:686px;" width="13" height="13" viewBox="0 0 13 13"><rect x="0.5" y="0.5" width="12" height="12" fill="#fff" stroke="#101010"/><path d="M2.5,6.5 l3,3 l5,-7" stroke="#10b030" stroke-width="2.4" fill="none"/></svg>
<svg class="a" style="left:101px;top:683px;" width="18" height="19" viewBox="0 0 18 19"><circle cx="5" cy="5" r="4" fill="#fff" stroke="#e02020" stroke-width="1.8"/><path d="M2,8 L8,2" stroke="#e02020" stroke-width="1.5"/><path d="M10,1 v6 h5 M10,4h4" stroke="#202020" stroke-width="1.2" fill="none"/><polygon points="4,11 11,8 17,11 17,15 11,18 4,15" fill="#3a70d8"/><polygon points="4,11 11,8 17,11 11,13" fill="#90b8f0"/><rect x="9" y="6" width="4" height="6" fill="#5a90f0"/></svg>
<div class="t" style="left:121px;top:685px;font-size:12px;color:#000">体</div>
<div class="t" style="left:140px;top:686px;font-size:11px;color:#000;letter-spacing:1.6px">(19)</div>
<div class="a" style="left:78px;top:712px;width:9px;height:1px;background:repeating-linear-gradient(90deg,#a0a0a0 0 1px,transparent 1px 2px)"></div>
<svg class="a" style="left:88px;top:706px;" width="13" height="13" viewBox="0 0 13 13"><rect x="0.5" y="0.5" width="12" height="12" fill="#fff" stroke="#101010"/><path d="M2.5,6.5 l3,3 l5,-7" stroke="#10b030" stroke-width="2.4" fill="none"/></svg>
<svg class="a" style="left:101px;top:703px;" width="18" height="19" viewBox="0 0 18 19"><circle cx="5" cy="5" r="4" fill="#fff" stroke="#e02020" stroke-width="1.8"/><path d="M2,8 L8,2" stroke="#e02020" stroke-width="1.5"/><path d="M10,1 v6 h5 M10,4h4" stroke="#202020" stroke-width="1.2" fill="none"/><polygon points="4,11 11,8 17,11 17,15 11,18 4,15" fill="#3a70d8"/><polygon points="4,11 11,8 17,11 11,13" fill="#90b8f0"/><rect x="9" y="6" width="4" height="6" fill="#5a90f0"/></svg>
<div class="t" style="left:121px;top:705px;font-size:12px;color:#000">体</div>
<div class="t" style="left:140px;top:706px;font-size:11px;color:#000;letter-spacing:1.6px">(20)</div>
<div class="a" style="left:78px;top:732px;width:9px;height:1px;background:repeating-linear-gradient(90deg,#a0a0a0 0 1px,transparent 1px 2px)"></div>
<svg class="a" style="left:88px;top:726px;" width="13" height="13" viewBox="0 0 13 13"><rect x="0.5" y="0.5" width="12" height="12" fill="#fff" stroke="#101010"/><path d="M2.5,6.5 l3,3 l5,-7" stroke="#10b030" stroke-width="2.4" fill="none"/></svg>
<svg class="a" style="left:101px;top:723px;" width="18" height="19" viewBox="0 0 18 19"><circle cx="5" cy="5" r="4" fill="#fff" stroke="#e02020" stroke-width="1.8"/><path d="M2,8 L8,2" stroke="#e02020" stroke-width="1.5"/><path d="M10,1 v6 h5 M10,4h4" stroke="#202020" stroke-width="1.2" fill="none"/><polygon points="4,11 11,8 17,11 17,15 11,18 4,15" fill="#3a70d8"/><polygon points="4,11 11,8 17,11 11,13" fill="#90b8f0"/><rect x="9" y="6" width="4" height="6" fill="#5a90f0"/></svg>
<div class="t" style="left:121px;top:725px;font-size:12px;color:#000">体</div>
<div class="t" style="left:140px;top:726px;font-size:11px;color:#000;letter-spacing:1.6px">(21)</div>
<div class="a" style="left:78px;top:752px;width:9px;height:1px;background:repeating-linear-gradient(90deg,#a0a0a0 0 1px,transparent 1px 2px)"></div>
<svg class="a" style="left:88px;top:746px;" width="13" height="13" viewBox="0 0 13 13"><rect x="0.5" y="0.5" width="12" height="12" fill="#fff" stroke="#101010"/><path d="M2.5,6.5 l3,3 l5,-7" stroke="#10b030" stroke-width="2.4" fill="none"/></svg>
<svg class="a" style="left:101px;top:743px;" width="18" height="19" viewBox="0 0 18 19"><circle cx="5" cy="5" r="4" fill="#fff" stroke="#e02020" stroke-width="1.8"/><path d="M2,8 L8,2" stroke="#e02020" stroke-width="1.5"/><path d="M10,1 v6 h5 M10,4h4" stroke="#202020" stroke-width="1.2" fill="none"/><polygon points="4,11 11,8 17,11 17,15 11,18 4,15" fill="#3a70d8"/><polygon points="4,11 11,8 17,11 11,13" fill="#90b8f0"/><rect x="9" y="6" width="4" height="6" fill="#5a90f0"/></svg>
<div class="t" style="left:121px;top:745px;font-size:12px;color:#000">体</div>
<div class="t" style="left:140px;top:746px;font-size:11px;color:#000;letter-spacing:1.6px">(22)</div>
<div class="a" style="left:78px;top:772px;width:9px;height:1px;background:repeating-linear-gradient(90deg,#a0a0a0 0 1px,transparent 1px 2px)"></div>
<svg class="a" style="left:88px;top:766px;" width="13" height="13" viewBox="0 0 13 13"><rect x="0.5" y="0.5" width="12" height="12" fill="#fff" stroke="#101010"/><path d="M2.5,6.5 l3,3 l5,-7" stroke="#10b030" stroke-width="2.4" fill="none"/></svg>
<svg class="a" style="left:101px;top:763px;" width="18" height="19" viewBox="0 0 18 19"><circle cx="5" cy="5" r="4" fill="#fff" stroke="#e02020" stroke-width="1.8"/><path d="M2,8 L8,2" stroke="#e02020" stroke-width="1.5"/><path d="M10,1 v6 h5 M10,4h4" stroke="#202020" stroke-width="1.2" fill="none"/><polygon points="4,11 11,8 17,11 17,15 11,18 4,15" fill="#3a70d8"/><polygon points="4,11 11,8 17,11 11,13" fill="#90b8f0"/><rect x="9" y="6" width="4" height="6" fill="#5a90f0"/></svg>
<div class="t" style="left:121px;top:765px;font-size:12px;color:#000">体</div>
<div class="t" style="left:140px;top:766px;font-size:11px;color:#000;letter-spacing:1.6px">(23)</div>
<div class="a" style="left:78px;top:792px;width:9px;height:1px;background:repeating-linear-gradient(90deg,#a0a0a0 0 1px,transparent 1px 2px)"></div>
<svg class="a" style="left:88px;top:786px;" width="13" height="13" viewBox="0 0 13 13"><rect x="0.5" y="0.5" width="12" height="12" fill="#fff" stroke="#101010"/><path d="M2.5,6.5 l3,3 l5,-7" stroke="#10b030" stroke-width="2.4" fill="none"/></svg>
<svg class="a" style="left:101px;top:783px;" width="18" height="19" viewBox="0 0 18 19"><circle cx="5" cy="5" r="4" fill="#fff" stroke="#e02020" stroke-width="1.8"/><path d="M2,8 L8,2" stroke="#e02020" stroke-width="1.5"/><path d="M10,1 v6 h5 M10,4h4" stroke="#202020" stroke-width="1.2" fill="none"/><polygon points="4,11 11,8 17,11 17,15 11,18 4,15" fill="#3a70d8"/><polygon points="4,11 11,8 17,11 11,13" fill="#90b8f0"/><rect x="9" y="6" width="4" height="6" fill="#5a90f0"/></svg>
<div class="t" style="left:121px;top:785px;font-size:12px;color:#000">体</div>
<div class="t" style="left:140px;top:786px;font-size:11px;color:#000;letter-spacing:1.6px">(24)</div>
<div class="a" style="left:78px;top:812px;width:9px;height:1px;background:repeating-linear-gradient(90deg,#a0a0a0 0 1px,transparent 1px 2px)"></div>
<svg class="a" style="left:88px;top:806px;" width="13" height="13" viewBox="0 0 13 13"><rect x="0.5" y="0.5" width="12" height="12" fill="#fff" stroke="#101010"/><path d="M2.5,6.5 l3,3 l5,-7" stroke="#10b030" stroke-width="2.4" fill="none"/></svg>
<svg class="a" style="left:101px;top:803px;" width="18" height="19" viewBox="0 0 18 19"><circle cx="5" cy="5" r="4" fill="#fff" stroke="#e02020" stroke-width="1.8"/><path d="M2,8 L8,2" stroke="#e02020" stroke-width="1.5"/><path d="M10,1 v6 h5 M10,4h4" stroke="#202020" stroke-width="1.2" fill="none"/><polygon points="4,11 11,8 17,11 17,15 11,18 4,15" fill="#3a70d8"/><polygon points="4,11 11,8 17,11 11,13" fill="#90b8f0"/><rect x="9" y="6" width="4" height="6" fill="#5a90f0"/></svg>
<div class="t" style="left:121px;top:805px;font-size:12px;color:#000">体</div>
<div class="t" style="left:140px;top:806px;font-size:11px;color:#000;letter-spacing:1.6px">(25)</div>
<div class="a" style="left:78px;top:832px;width:9px;height:1px;background:repeating-linear-gradient(90deg,#a0a0a0 0 1px,transparent 1px 2px)"></div>
<svg class="a" style="left:88px;top:826px;" width="13" height="13" viewBox="0 0 13 13"><rect x="0.5" y="0.5" width="12" height="12" fill="#fff" stroke="#101010"/><path d="M2.5,6.5 l3,3 l5,-7" stroke="#10b030" stroke-width="2.4" fill="none"/></svg>
<svg class="a" style="left:101px;top:823px;" width="18" height="19" viewBox="0 0 18 19"><circle cx="5" cy="5" r="4" fill="#fff" stroke="#e02020" stroke-width="1.8"/><path d="M2,8 L8,2" stroke="#e02020" stroke-width="1.5"/><path d="M10,1 v6 h5 M10,4h4" stroke="#202020" stroke-width="1.2" fill="none"/><polygon points="4,11 11,8 17,11 17,15 11,18 4,15" fill="#3a70d8"/><polygon points="4,11 11,8 17,11 11,13" fill="#90b8f0"/><rect x="9" y="6" width="4" height="6" fill="#5a90f0"/></svg>
<div class="t" style="left:121px;top:825px;font-size:12px;color:#000">体</div>
<div class="t" style="left:140px;top:826px;font-size:11px;color:#000;letter-spacing:1.6px">(26)</div>
<div class="a" style="left:78px;top:852px;width:9px;height:1px;background:repeating-linear-gradient(90deg,#a0a0a0 0 1px,transparent 1px 2px)"></div>
<svg class="a" style="left:88px;top:846px;" width="13" height="13" viewBox="0 0 13 13"><rect x="0.5" y="0.5" width="12" height="12" fill="#fff" stroke="#101010"/><path d="M2.5,6.5 l3,3 l5,-7" stroke="#10b030" stroke-width="2.4" fill="none"/></svg>
<svg class="a" style="left:101px;top:843px;" width="18" height="19" viewBox="0 0 18 19"><circle cx="5" cy="5" r="4" fill="#fff" stroke="#e02020" stroke-width="1.8"/><path d="M2,8 L8,2" stroke="#e02020" stroke-width="1.5"/><path d="M10,1 v6 h5 M10,4h4" stroke="#202020" stroke-width="1.2" fill="none"/><polygon points="4,11 11,8 17,11 17,15 11,18 4,15" fill="#3a70d8"/><polygon points="4,11 11,8 17,11 11,13" fill="#90b8f0"/><rect x="9" y="6" width="4" height="6" fill="#5a90f0"/></svg>
<div class="t" style="left:121px;top:845px;font-size:12px;color:#000">体</div>
<div class="t" style="left:140px;top:846px;font-size:11px;color:#000;letter-spacing:1.6px">(27)</div>
<div class="a" style="left:78px;top:872px;width:9px;height:1px;background:repeating-linear-gradient(90deg,#a0a0a0 0 1px,transparent 1px 2px)"></div>
<svg class="a" style="left:88px;top:866px;" width="13" height="13" viewBox="0 0 13 13"><rect x="0.5" y="0.5" width="12" height="12" fill="#fff" stroke="#101010"/><path d="M2.5,6.5 l3,3 l5,-7" stroke="#10b030" stroke-width="2.4" fill="none"/></svg>
<svg class="a" style="left:101px;top:864px;" width="18" height="18" viewBox="0 0 18 18"><polygon points="2,5 9,1 16,4 16,13 9,17 2,13" fill="#5a80e0"/><polygon points="2,5 9,1 16,4 9,8" fill="#c0d4ff"/><polygon points="9,8 16,4 16,13 9,17" fill="#3a60c8"/></svg>
<div class="t" style="left:121px;top:865px;font-size:12px;color:#000">块</div>
<div class="t" style="left:140px;top:866px;font-size:11px;color:#000;letter-spacing:1.6px">(28)</div>
<div class="a" style="left:78px;top:892px;width:9px;height:1px;background:repeating-linear-gradient(90deg,#a0a0a0 0 1px,transparent 1px 2px)"></div>
<svg class="a" style="left:88px;top:886px;" width="13" height="13" viewBox="0 0 13 13"><rect x="0.5" y="0.5" width="12" height="12" fill="#fff" stroke="#101010"/><path d="M2.5,6.5 l3,3 l5,-7" stroke="#10b030" stroke-width="2.4" fill="none"/></svg>
<svg class="a" style="left:101px;top:884px;" width="18" height="18" viewBox="0 0 18 18"><polygon points="2,5 9,1 16,4 16,13 9,17 2,13" fill="#5a80e0"/><polygon points="2,5 9,1 16,4 9,8" fill="#c0d4ff"/><polygon points="9,8 16,4 16,13 9,17" fill="#3a60c8"/></svg>
<div class="t" style="left:121px;top:885px;font-size:12px;color:#000">块</div>
<div class="t" style="left:140px;top:886px;font-size:11px;color:#000;letter-spacing:1.6px">(29)</div>
<div class="a" style="left:78px;top:912px;width:9px;height:1px;background:repeating-linear-gradient(90deg,#a0a0a0 0 1px,transparent 1px 2px)"></div>
<svg class="a" style="left:88px;top:906px;" width="13" height="13" viewBox="0 0 13 13"><rect x="0.5" y="0.5" width="12" height="12" fill="#fff" stroke="#101010"/><path d="M2.5,6.5 l3,3 l5,-7" stroke="#10b030" stroke-width="2.4" fill="none"/></svg>
<svg class="a" style="left:101px;top:904px;" width="18" height="18" viewBox="0 0 18 18"><polygon points="2,5 9,1 16,4 16,13 9,17 2,13" fill="#5a80e0"/><polygon points="2,5 9,1 16,4 9,8" fill="#c0d4ff"/><polygon points="9,8 16,4 16,13 9,17" fill="#3a60c8"/></svg>
<div class="t" style="left:121px;top:905px;font-size:12px;color:#000">块</div>
<div class="t" style="left:140px;top:906px;font-size:11px;color:#000;letter-spacing:1.6px">(30)</div>
<div class="a" style="left:305px;top:282px;width:17px;height:638px;background:#f4f4f6;border-left:1px solid #e0e0e4"></div>
<svg class="a" style="left:309px;top:288px;" width="9" height="5" viewBox="0 0 9 5"><polygon points="0,5 9,5 4.5,0" fill="#303030"/></svg>
<div class="a" style="left:307px;top:306px;width:14px;height:26px;background:linear-gradient(90deg,#f8f8fa,#d0d0d4);border:1px solid #a0a0a4;border-radius:2px"></div>
<div class="a" style="left:310px;top:316px;width:7px;height:1px;background:#404040"></div>
<div class="a" style="left:310px;top:319px;width:7px;height:1px;background:#404040"></div>
<div class="a" style="left:310px;top:322px;width:7px;height:1px;background:#404040"></div>
<svg class="a" style="left:309px;top:909px;" width="9" height="5" viewBox="0 0 9 5"><polygon points="0,0 9,0 4.5,5" fill="#303030"/></svg>
<div class="a" style="left:47px;top:920px;width:276px;height:18px;background:#f0f0f2;border-top:1px solid #d8d8dc"></div>
<svg class="a" style="left:53px;top:925px;" width="5" height="8" viewBox="0 0 5 8"><polygon points="5,0 5,8 0,4" fill="#303030"/></svg>
<div class="a" style="left:66px;top:922px;width:188px;height:14px;background:linear-gradient(#f8f8fa,#c8c8cc);border:1px solid #a0a0a4;border-radius:2px"></div>
<div class="a" style="left:156px;top:926px;width:1px;height:6px;background:#404040"></div>
<div class="a" style="left:159px;top:926px;width:1px;height:6px;background:#404040"></div>
<div class="a" style="left:162px;top:926px;width:1px;height:6px;background:#404040"></div>
<svg class="a" style="left:294px;top:925px;" width="5" height="8" viewBox="0 0 5 8"><polygon points="0,0 0,8 5,4" fill="#303030"/></svg>
<div class="a" style="left:46px;top:943px;width:278px;height:1px;background:#c4c4c8"></div>
<div class="a" style="left:160px;top:941px;width:50px;height:6px;background:linear-gradient(#f4f4f6,#c0c0c4);border:1px solid #a8a8ac"></div>
<div class="a" style="left:37px;top:955px;width:297px;height:1px;background:#808084"></div>
<svg class="a" style="left:0;top:0" width="1489" height="1033" viewBox="0 0 1489 1033">
<defs><clipPath id="vp"><rect x="335" y="234" width="1150" height="723"/></clipPath></defs>
<g clip-path="url(#vp)" stroke="#000" stroke-width="1.9" stroke-linejoin="round">
<!-- BCP -->
<polygon points="530.5,749.6 948,622 1289,778 871,905.5" fill="#fff"/>
<polygon points="530.5,749.6 871,905.5 871,946.6 530.5,790" fill="#b6b4b6"/>
<polygon points="871,905.5 1289,778 1289,820 871,946.6" fill="#d5d5d3"/>
<path d="M858,895.5 L871.5,901.5 L888,896.5" fill="none" stroke="#000" stroke-width="4.2" stroke-linecap="round"/><path d="M858,895.5 L871.5,901.5 L888,896.5" fill="none" stroke="#fff" stroke-width="1.8" stroke-linecap="round"/>
<!-- gap interior -->
<polygon points="613,640 700,693.4 613,720" fill="#d6d6d4" stroke="none"/>
<polygon points="613,720 700,693.4 788,733 788,799" fill="#fff" stroke="none"/>
<polygon points="614,720 788,799 788,825 614,747" fill="#a9b0bb"/>
<polygon points="614,747 788,825 788,857 614,783" fill="#c3b2bc"/>
<polygon points="613,783 788,857 788,867 613,788" fill="#fff"/>
<!-- springs -->
<g stroke="#000" stroke-width="1"><rect x="645" y="660" width="55" height="64" fill="#1c1c90" stroke="none"/><ellipse cx="672.5" cy="668" rx="27.5" ry="5.5" fill="#2a2ab0"/><path d="M645,668 a27.5,5.5 0 0 0 55,0 v-2.5 a27.5,5.5 0 0 1 -55,0 z" fill="#4a4af4" stroke="none"/><ellipse cx="672.5" cy="675" rx="27.5" ry="5.5" fill="#2a2ab0"/><path d="M645,675 a27.5,5.5 0 0 0 55,0 v-2.5 a27.5,5.5 0 0 1 -55,0 z" fill="#4a4af4" stroke="none"/><ellipse cx="672.5" cy="682" rx="27.5" ry="5.5" fill="#2a2ab0"/><path d="M645,682 a27.5,5.5 0 0 0 55,0 v-2.5 a27.5,5.5 0 0 1 -55,0 z" fill="#4a4af4" stroke="none"/><ellipse cx="672.5" cy="689" rx="27.5" ry="5.5" fill="#2a2ab0"/><path d="M645,689 a27.5,5.5 0 0 0 55,0 v-2.5 a27.5,5.5 0 0 1 -55,0 z" fill="#4a4af4" stroke="none"/><ellipse cx="672.5" cy="696" rx="27.5" ry="5.5" fill="#2a2ab0"/><path d="M645,696 a27.5,5.5 0 0 0 55,0 v-2.5 a27.5,5.5 0 0 1 -55,0 z" fill="#4a4af4" stroke="none"/><ellipse cx="672.5" cy="703" rx="27.5" ry="5.5" fill="#2a2ab0"/><path d="M645,703 a27.5,5.5 0 0 0 55,0 v-2.5 a27.5,5.5 0 0 1 -55,0 z" fill="#4a4af4" stroke="none"/><ellipse cx="672.5" cy="710" rx="27.5" ry="5.5" fill="#2a2ab0"/><path d="M645,710 a27.5,5.5 0 0 0 55,0 v-2.5 a27.5,5.5 0 0 1 -55,0 z" fill="#4a4af4" stroke="none"/><ellipse cx="672.5" cy="717" rx="27.5" ry="5.5" fill="#2a2ab0"/><path d="M645,717 a27.5,5.5 0 0 0 55,0 v-2.5 a27.5,5.5 0 0 1 -55,0 z" fill="#4a4af4" stroke="none"/><ellipse cx="672.5" cy="724" rx="27.5" ry="5.5" fill="#2a2ab0"/><path d="M645,724 a27.5,5.5 0 0 0 55,0 v-2.5 a27.5,5.5 0 0 1 -55,0 z" fill="#4a4af4" stroke="none"/><ellipse cx="674" cy="725" rx="8" ry="2" fill="#e0d040" stroke="none"/><ellipse cx="638" cy="722" rx="7" ry="3" fill="#3a3ae0" stroke="#000" stroke-width="0.6"/><rect x="771" y="724" width="17" height="56" fill="#1c1c90" stroke="none"/><ellipse cx="781" cy="731" rx="10.5" ry="3.8" fill="#2a2ab0"/><path d="M770.5,731 a10.5,3.8 0 0 0 21,0 v-2 a10.5,3.8 0 0 1 -21,0 z" fill="#4a4af4" stroke="none"/><ellipse cx="781" cy="738" rx="10.5" ry="3.8" fill="#2a2ab0"/><path d="M770.5,738 a10.5,3.8 0 0 0 21,0 v-2 a10.5,3.8 0 0 1 -21,0 z" fill="#4a4af4" stroke="none"/><ellipse cx="781" cy="745" rx="10.5" ry="3.8" fill="#2a2ab0"/><path d="M770.5,745 a10.5,3.8 0 0 0 21,0 v-2 a10.5,3.8 0 0 1 -21,0 z" fill="#4a4af4" stroke="none"/><ellipse cx="781" cy="752" rx="10.5" ry="3.8" fill="#2a2ab0"/><path d="M770.5,752 a10.5,3.8 0 0 0 21,0 v-2 a10.5,3.8 0 0 1 -21,0 z" fill="#4a4af4" stroke="none"/><ellipse cx="781" cy="759" rx="10.5" ry="3.8" fill="#2a2ab0"/><path d="M770.5,759 a10.5,3.8 0 0 0 21,0 v-2 a10.5,3.8 0 0 1 -21,0 z" fill="#4a4af4" stroke="none"/><ellipse cx="781" cy="766" rx="10.5" ry="3.8" fill="#2a2ab0"/><path d="M770.5,766 a10.5,3.8 0 0 0 21,0 v-2 a10.5,3.8 0 0 1 -21,0 z" fill="#4a4af4" stroke="none"/><ellipse cx="781" cy="773" rx="10.5" ry="3.8" fill="#2a2ab0"/><path d="M770.5,773 a10.5,3.8 0 0 0 21,0 v-2 a10.5,3.8 0 0 1 -21,0 z" fill="#4a4af4" stroke="none"/><ellipse cx="781" cy="780" rx="10.5" ry="3.8" fill="#2a2ab0"/><path d="M770.5,780 a10.5,3.8 0 0 0 21,0 v-2 a10.5,3.8 0 0 1 -21,0 z" fill="#4a4af4" stroke="none"/><path d="M774,784 l8,-3 l6,2" stroke="#000" stroke-width="1" fill="#fff"/></g>
<!-- left support block -->
<polygon points="558,620 613,645 613,786 558,761" fill="#b6b4b6"/>
<!-- right support block -->
<polygon points="788,720 843,745 843,892 788,867" fill="#b6b4b6"/>
<polygon points="843,745 1262,620 1262,765 843,892" fill="#d5d5d3"/>
<!-- red plate -->
<polygon points="558,519 843,649 843,758 558,629" fill="#b86a68"/>
<polygon points="843,649 1262,522 1262,634 843,758" fill="#cf7a72"/>
<!-- T slots -->
<polygon points="718.6,593 747,606 747,628 753,630 753,638 712,620 712,612 718.6,612" fill="#f5b0b0" stroke-width="1.2"/>
<polygon points="718.6,593 741,603.5 714,619.5 718.6,612" fill="#d58c88" stroke-width="1"/><path d="M713,619.5 L741.5,603.8" stroke-width="1.4"/>
<polygon points="988.6,605 1027,622.9 981,637.4 981,629.8 988.6,626.9" fill="#f7b3b3" stroke-width="1.2"/>
<polygon points="993,603.7 1021.7,595.6 1021.7,616.5 1029.2,614.7 1029.2,622.3 1027,622.9" fill="#c97773" stroke-width="1.2"/>
<ellipse cx="1031.3" cy="667.5" rx="8.5" ry="10.5" fill="#7f8080" transform="rotate(20 1031.3 667.5)"/>
<ellipse cx="1073.4" cy="654.5" rx="8.5" ry="10.5" fill="#7f8080" transform="rotate(20 1073.4 654.5)"/>
<!-- blue plate -->
<polygon points="558,405 843,540 843,649 558,519" fill="#668ac2"/>
<polygon points="843,540 1262,410 1262,522 843,649" fill="#76a6d0"/>
<ellipse cx="1030" cy="519" rx="7" ry="6" fill="#7e8088"/>
<ellipse cx="1072" cy="506" rx="7" ry="6" fill="#7e8088"/>
<!-- TCP -->
<polygon points="531,371 949,243 1288,400 871,528" fill="#fff"/>
<polygon points="531,371 871,528 871,570 531,413" fill="#b6b4b6"/>
<polygon points="871,528 1288,400 1288,442 871,570" fill="#d5d5d3"/>
<!-- holes -->
<g id="hole">
<ellipse cx="688.4" cy="365.8" rx="21" ry="7.8" fill="#fff" stroke-width="1.6"/>
<ellipse cx="688.4" cy="366.8" rx="18" ry="6.2" fill="#00ee00" stroke-width="1"/>
<ellipse cx="688.4" cy="367" rx="10" ry="4" fill="#0a9a0a" stroke-width="1.4"/>
<line x1="686.5" y1="363" x2="686.5" y2="371" stroke-width="1.2"/>
</g>
<use href="#hole" transform="translate(215.6,-66)"/>
<use href="#hole" transform="translate(443.2,39)"/>
<use href="#hole" transform="translate(227.8,105)"/>
<!-- locating ring -->
<path d="M820,368 L820,387 A90,32.6 0 0 0 1000,387 L1000,368 Z" fill="#127d66" stroke-width="1.6"/>
<ellipse cx="910" cy="368" rx="90" ry="32.6" fill="#1cb494" stroke-width="1.6"/>
<path d="M821,372 A89,32 0 0 0 999,372" fill="none" stroke-width="1"/>
<ellipse cx="910" cy="368.6" rx="65" ry="24" fill="#10785f" stroke-width="1.6"/>
<path d="M847,366 A63,22 0 0 1 973,366" fill="none" stroke-width="0.8"/>
<path d="M856,381 A54,12.5 0 0 1 964,381 A54,11.5 0 0 1 856,381 Z" fill="#fff" stroke-width="1.8"/>
<ellipse cx="861" cy="346.5" rx="9" ry="3.8" fill="#18a080" stroke-width="1.2"/>
<ellipse cx="861" cy="347.5" rx="5" ry="2" fill="#6a8a20" stroke="none"/>
<ellipse cx="958.5" cy="392.5" rx="9" ry="3.8" fill="#18a080" stroke-width="1.2"/>
<ellipse cx="958.5" cy="393.5" rx="5" ry="2" fill="#6a8a20" stroke="none"/>
</g>
<!-- CSYS (no stroke) -->
<g clip-path="url(#vp)">
<polygon points="908,468 912.5,468 911,516 909.5,516" fill="#5a78d0"/>
<path d="M913,521 Q930,512 953,507 Q935,516 915,522 Z" fill="#b8e8b0"/>
<path d="M912,521 Q930,527 945,535 Q928,531 911,523 Z" fill="#e89898"/>
<text x="913" y="467" font-size="12" fill="#3050f0" font-family="Liberation Sans">ZC</text>
<text x="940" y="503" font-size="12" fill="#309030" font-family="Liberation Sans">YC</text>
<text x="931" y="548" font-size="12" fill="#d03030" font-family="Liberation Sans">XC</text>
<g fill="none" stroke="#f5a040" stroke-width="2.6">
<ellipse cx="867.3" cy="518" rx="15.5" ry="12.5"/>
<ellipse cx="866.6" cy="526.4" rx="13.3" ry="11.5"/>
<ellipse cx="867.2" cy="531.4" rx="11.5" ry="11.5"/>
<ellipse cx="889" cy="546" rx="5.5" ry="6"/>
<path d="M877,538 L885,541 M873,542 L884,551"/>
</g>
</g>
</svg>
<svg class="a" style="left:375px;top:840px;" width="70" height="85" viewBox="0 0 70 85"><polygon points="20,32 36,27.6 52.5,34 52.5,57 36,63 20,57" fill="#bdbdbd" opacity="0.95"/>
<path d="M20,57 L36,50 L52.5,57 M36,27.6 v22" stroke="#d8d8d8" stroke-width="0.6" fill="none"/>
<path d="M36,50 L56,40" stroke="#c8f0c8" stroke-width="1"/>
<path d="M54,42 l3,-5" stroke="#30a030" stroke-width="1.6"/>
<rect x="17" y="20" width="3.4" height="33" fill="#1840e8"/>
<polygon points="16,26 18.7,18 21.4,26" fill="#1840e8"/>
<text x="15" y="18" font-size="11" fill="#2050f0" font-family="Liberation Sans">Z</text>
<circle cx="18" cy="55" r="4.2" fill="#e8e8e8"/>
<polygon points="21,55 44,65 42,68 20,58" fill="#e02020"/>
<text x="43" y="73" font-size="11" fill="#e03030" font-family="Liberation Sans">X</text></svg>
<div class="a" style="left:1070px;top:913px;width:40px;height:40px;background:#c8d0dc;border:2px solid #3a80e8"></div>
<svg class="a" style="left:1076px;top:918px;" width="28" height="30" viewBox="0 0 28 30"><path d="M7,26 q-4,-2 -2,-10 q1,-12 9,-12 q8,0 9,12 q2,8 -2,10 z" fill="none" stroke="#aab4c0" stroke-width="2.2"/><ellipse cx="14" cy="12" rx="5" ry="4" fill="none" stroke="#aab4c0" stroke-width="1.4"/></svg>
<div class="a" style="left:1109px;top:929px;width:128px;height:24px;background:#fff;border:2px solid #3a80e8;border-left:none"></div>
<div class="t" style="left:1114px;top:933px;color:#2070e0;font-size:13px;line-height:15px"><b>中</b></div>
<svg class="a" style="left:1136px;top:933px;" width="13" height="15" viewBox="0 0 13 15"><path d="M9,1 q-9,2 -7,9 q3,5 10,2 q-6,-2 -3,-11 z" fill="#2070e0"/></svg>
<svg class="a" style="left:1156px;top:936px;" width="13" height="10" viewBox="0 0 13 10"><circle cx="3" cy="5" r="2" fill="none" stroke="#2070e0" stroke-width="1.4"/><path d="M10,3 q1,4 -3,6" stroke="#2070e0" stroke-width="2" fill="none"/></svg>
<svg class="a" style="left:1176px;top:932px;" width="15" height="16" viewBox="0 0 15 16"><path d="M2,14 L9,7" stroke="#2070e0" stroke-width="3"/><circle cx="10.5" cy="5" r="4" fill="#2070e0"/><circle cx="12" cy="3.5" r="1.8" fill="#fff"/></svg>
<svg class="a" style="left:1198px;top:932px;" width="13" height="16" viewBox="0 0 13 16"><rect x="1" y="3" width="11" height="12" fill="#2070e0"/><rect x="4" y="1" width="5" height="3" fill="#2070e0"/><path d="M4,7v6M8,7v6" stroke="#fff" stroke-width="1.2"/></svg>
<svg class="a" style="left:1217px;top:931px;" width="17" height="17" viewBox="0 0 17 17"><circle cx="8.5" cy="8.5" r="7" fill="none" stroke="#2070e0" stroke-width="1.8"/><circle cx="6" cy="6.5" r="1.2" fill="#2070e0"/><circle cx="11" cy="6.5" r="1.2" fill="#2070e0"/><path d="M4.5,10 q4,4 8,0" stroke="#2070e0" stroke-width="1.5" fill="none"/></svg>
<div class="a" style="left:4px;top:957px;width:1481px;height:35px;background:#d8d8da;border-top:1px solid #fafafa"></div>
<div class="a" style="left:4px;top:992px;width:1481px;height:33px;background:#d8d8da;border-top:1px solid #fafafa"></div>
<div class="a" style="left:9px;top:962px;width:2px;height:26px;background:repeating-linear-gradient(#8c8c90 0 1px,transparent 1px 3px)"></div>
<svg class="a" style="left:16px;top:963px;" width="22" height="21" viewBox="0 0 22 21"><rect x="1" y="1" width="20" height="19" fill="#8c8c9a" stroke="#7a7a88"/><circle cx="11" cy="12" r="4" fill="none" stroke="#a8a098" stroke-width="1.2"/></svg>
<svg class="a" style="left:45px;top:962px;" width="25" height="23" viewBox="0 0 25 23"><g fill="#f0c830" stroke="#b08010" stroke-width="0.8"><rect x="2" y="3" width="8" height="8"/><rect x="2" y="12" width="8" height="8"/><rect x="11" y="12" width="8" height="8"/></g><path d="M14,6h9M18.5,1.5v9" stroke="#2060e0" stroke-width="2.2"/></svg>
<svg class="a" style="left:77px;top:962px;" width="25" height="23" viewBox="0 0 25 23"><g fill="#f0c830" stroke="#b08010" stroke-width="0.8"><rect x="7" y="7" width="9" height="9"/><rect x="12" y="3" width="8" height="8"/></g><path d="M3,20 q-2,-6 3,-10 M21,2 q3,5 -2,9" stroke="#3060e0" stroke-width="1.6" fill="none"/></svg>
<svg class="a" style="left:107px;top:962px;" width="24" height="24" viewBox="0 0 24 24"><polygon points="2,2 10,8 2,14" fill="#1818c8"/><polygon points="21,2 13,8 21,14" fill="#1818c8"/><path d="M11.5,0v24" stroke="#000" stroke-dasharray="2 1.5"/><rect x="2" y="15" width="8" height="8" fill="#f0e040" stroke="#606000" stroke-width="0.8"/><polygon points="13,14 22,23 13,23" fill="#d02020"/></svg>
<div class="a" style="left:138px;top:961px;width:2px;height:28px;border-left:1px solid #b4b4b8;border-right:1px solid #fbfbfb"></div>
<svg class="a" style="left:145px;top:962px;" width="24" height="23" viewBox="0 0 24 23"><g fill="#f0c830" stroke="#b08010" stroke-width="0.8"><rect x="6" y="2" width="8" height="8"/><rect x="2" y="12" width="8" height="8"/><rect x="12" y="12" width="8" height="8"/></g></svg>
<svg class="a" style="left:175px;top:982px;" width="7" height="4" viewBox="0 0 7 4"><polygon points="0,0 7,0 3.5,4" fill="#000"/></svg>
<div class="a" style="left:186px;top:961px;width:2px;height:28px;border-left:1px solid #b4b4b8;border-right:1px solid #fbfbfb"></div>
<div class="a" style="left:154px;top:994px;width:2px;height:30px;border-left:1px solid #b4b4b8;border-right:1px solid #fbfbfb"></div>
<div class="a" style="left:159px;top:996px;width:2px;height:26px;background:repeating-linear-gradient(#8c8c90 0 1px,transparent 1px 3px)"></div>
<svg class="a" style="left:165px;top:995px;" width="24" height="25" viewBox="0 0 24 25"><polygon points="2,4 18,8 18,23 2,19" fill="#fff" stroke="#202020" stroke-width="1.2"/><rect x="5" y="9" width="5" height="5" fill="none" stroke="#202020"/><rect x="10" y="14" width="5" height="5" fill="none" stroke="#202020"/><path d="M18,1 l2,6 l-6,0 z" fill="#f0e040"/><path d="M16,2 l6,6 M22,2 l-6,6" stroke="#f0e040" stroke-width="1.4"/></svg>
<svg class="a" style="left:195px;top:996px;" width="24" height="24" viewBox="0 0 24 24"><rect x="1" y="1" width="22" height="22" fill="#8a9898" stroke="#7a8888"/><path d="M4,12 q8,-8 16,0 q-8,8 -16,0" fill="#a0acac"/></svg>
<div class="t" style="left:223px;top:1001px;color:#9ea0a4;font-size:12px">完成草图</div>
<svg class="a" style="left:278px;top:996px;" width="25" height="24" viewBox="0 0 25 24"><path d="M3,4 v10 q0,7 6,7 q5,0 5,-6 q0,-6 5,-6 q4,0 4,6" stroke="#202020" stroke-width="1.6" fill="none"/><g fill="#e01818"><circle cx="3" cy="14" r="2.4"/><circle cx="14" cy="13" r="2.4"/><circle cx="22" cy="15" r="2.4"/></g></svg>
<svg class="a" style="left:310px;top:996px;" width="24" height="24" viewBox="0 0 24 24"><path d="M4,20 L20,4" stroke="#202020" stroke-width="1.5"/><circle cx="20" cy="4" r="2.6" fill="#e01818"/><circle cx="4" cy="20" r="2.6" fill="#e01818"/></svg>
<svg class="a" style="left:342px;top:996px;" width="24" height="24" viewBox="0 0 24 24"><path d="M4,4 q14,0 17,17" stroke="#202020" stroke-width="1.5" fill="none"/><g fill="#e01818"><circle cx="4" cy="4" r="2.6"/><circle cx="16" cy="8" r="2.6"/><circle cx="21" cy="20" r="2.6"/></g></svg>
<svg class="a" style="left:373px;top:996px;" width="24" height="24" viewBox="0 0 24 24"><circle cx="12" cy="12" r="9.5" fill="none" stroke="#202020" stroke-width="1.5"/></svg>
<svg class="a" style="left:404px;top:996px;" width="24" height="24" viewBox="0 0 24 24"><path d="M3,4 h10 q6,0 6,6 v11" stroke="#a0a0a4" stroke-width="1.4" fill="none"/></svg>
<svg class="a" style="left:435px;top:996px;" width="24" height="24" viewBox="0 0 24 24"><path d="M3,4 h8 l8,8 v9" stroke="#a0a0a4" stroke-width="1.4" fill="none"/></svg>
<svg class="a" style="left:466px;top:996px;" width="24" height="24" viewBox="0 0 24 24"><rect x="3" y="6" width="18" height="12" fill="none" stroke="#202020" stroke-width="1.5"/><circle cx="3" cy="18" r="2.2" fill="#e01818"/><circle cx="21" cy="6" r="2.2" fill="#e01818"/></svg>
<svg class="a" style="left:497px;top:996px;" width="24" height="24" viewBox="0 0 24 24"><path d="M3,12 l6,-8 l6,14 l6,-6" stroke="#202020" stroke-width="1.4" fill="none"/><g fill="#e01818"><circle cx="3" cy="12" r="2.2"/><circle cx="9" cy="4" r="2.2"/><circle cx="15" cy="18" r="2.2"/><circle cx="21" cy="12" r="2.2"/></g></svg>
<svg class="a" style="left:528px;top:996px;" width="24" height="24" viewBox="0 0 24 24"><path d="M12,3 v18 M3,12 h18" stroke="#202020" stroke-width="1.6"/></svg>
<svg class="a" style="left:559px;top:996px;" width="32" height="24" viewBox="0 0 32 24"><path d="M4,21 v-10 l5,-6 h8 l6,6 q-2,6 2,10 z" fill="none" stroke="#a0a0a4" stroke-width="1.6"/><path d="M8,18 v-6 l3,-3 h4" stroke="#a0a0a4" stroke-width="1.2" fill="none"/></svg>
<svg class="a" style="left:590px;top:1006px;" width="7" height="4" viewBox="0 0 7 4"><polygon points="0,0 7,0 3.5,4" fill="#000"/></svg>
<div class="a" style="left:601px;top:994px;width:2px;height:30px;border-left:1px solid #b4b4b8;border-right:1px solid #fbfbfb"></div>
<svg class="a" style="left:609px;top:996px;" width="25" height="24" viewBox="0 0 25 24"><path d="M3,21 L21,3" stroke="#a0a0a4" stroke-width="1.5"/><path d="M5,8 l14,8" stroke="#a0a0a4" stroke-width="1.2"/><polygon points="12,8 20,4 16,12" fill="#a0a0a4"/></svg>
<svg class="a" style="left:637px;top:996px;" width="25" height="24" viewBox="0 0 25 24"><path d="M3,21 L21,3" stroke="#a0a0a4" stroke-width="1.5"/><path d="M10,3 l4,18" stroke="#a0a0a4" stroke-width="1.2"/><polygon points="14,6 21,2 18,10" fill="#a0a0a4"/></svg>
<div class="a" style="left:669px;top:994px;width:2px;height:30px;border-left:1px solid #b4b4b8;border-right:1px solid #fbfbfb"></div>
<svg class="a" style="left:675px;top:996px;" width="26" height="24" viewBox="0 0 26 24"><path d="M2,8 v10 M24,8 v10 M2,13 h22" stroke="#a0a0a4" stroke-width="1.4"/><path d="M8,18 L20,4" stroke="#a0a0a4" stroke-width="1.4"/><polygon points="16,4 22,2 20,8" fill="#a0a0a4"/></svg>
<svg class="a" style="left:706px;top:1006px;" width="7" height="4" viewBox="0 0 7 4"><polygon points="0,0 7,0 3.5,4" fill="#000"/></svg>
<div class="a" style="left:716px;top:994px;width:2px;height:30px;border-left:1px solid #b4b4b8;border-right:1px solid #fbfbfb"></div>
<svg class="a" style="left:722px;top:996px;" width="25" height="24" viewBox="0 0 25 24"><path d="M3,20 L14,6 M10,20 h12 M16,14 v6" stroke="#a0a0a4" stroke-width="1.4"/></svg>
<svg class="a" style="left:753px;top:996px;" width="25" height="24" viewBox="0 0 25 24"><path d="M3,21 L9,10 h13 M9,10 l-3,-5" stroke="#a0a0a4" stroke-width="1.5" fill="none"/><circle cx="9" cy="10" r="2" fill="#c08080"/></svg>
<svg class="a" style="left:786px;top:1006px;" width="7" height="4" viewBox="0 0 7 4"><polygon points="0,0 7,0 3.5,4" fill="#000"/></svg>
<svg class="a" style="left:796px;top:996px;" width="25" height="24" viewBox="0 0 25 24"><circle cx="12" cy="14" r="7" fill="none" stroke="#a0a0a4" stroke-width="1.5"/><path d="M4,6 l16,16 M20,4 l-8,8" stroke="#a0a0a4" stroke-width="1.4"/></svg>
<svg class="a" style="left:827px;top:996px;" width="32" height="24" viewBox="0 0 32 24"><polygon points="3,10 8,13 3,16" fill="#40a040"/><path d="M10,20 L22,6 M14,20 h14 M18,14 v6" stroke="#a0a0a4" stroke-width="1.4"/></svg>
<svg class="a" style="left:862px;top:1006px;" width="7" height="4" viewBox="0 0 7 4"><polygon points="0,0 7,0 3.5,4" fill="#000"/></svg>
<svg class="a" style="left:871px;top:1014px;" width="7" height="4" viewBox="0 0 7 4"><polygon points="0,0 7,0 3.5,4" fill="#000"/></svg>
<div class="a" style="left:882px;top:994px;width:2px;height:30px;border-left:1px solid #b4b4b8;border-right:1px solid #fbfbfb"></div>
<div class="a" style="left:1420px;top:985px;width:69px;height:48px;background:#fff;border:1px solid #7aa8e0"></div>
<div class="a" style="left:1420px;top:985px;width:69px;height:24px;background:linear-gradient(#5aa0f0,#2a70d8)"></div>
<svg class="a" style="left:1423px;top:989px;" width="17" height="16" viewBox="0 0 17 16"><ellipse cx="8.5" cy="9" rx="7" ry="6" fill="#f0a050" stroke="#a05010"/><path d="M1,4 q2,-3 4,0 M12,4 q2,-3 4,0" stroke="#a05010" fill="#f0a050"/><circle cx="6" cy="8" r="1" fill="#000"/><circle cx="11" cy="8" r="1" fill="#000"/><ellipse cx="8.5" cy="12" rx="3.5" ry="2" fill="#f8d0a0"/></svg>
<div class="t" style="left:1441px;top:990px;color:#fff;font-size:12px;line-height:15px">系统消息</div>
<div class="t" style="left:1427px;top:1014px;color:#202020;font-size:12px;line-height:15px">收到</div>
<div class="t" style="left:1468px;top:1014px;color:#2a70d8;font-size:12px;line-height:15px">白雪</div>
</body></html>
